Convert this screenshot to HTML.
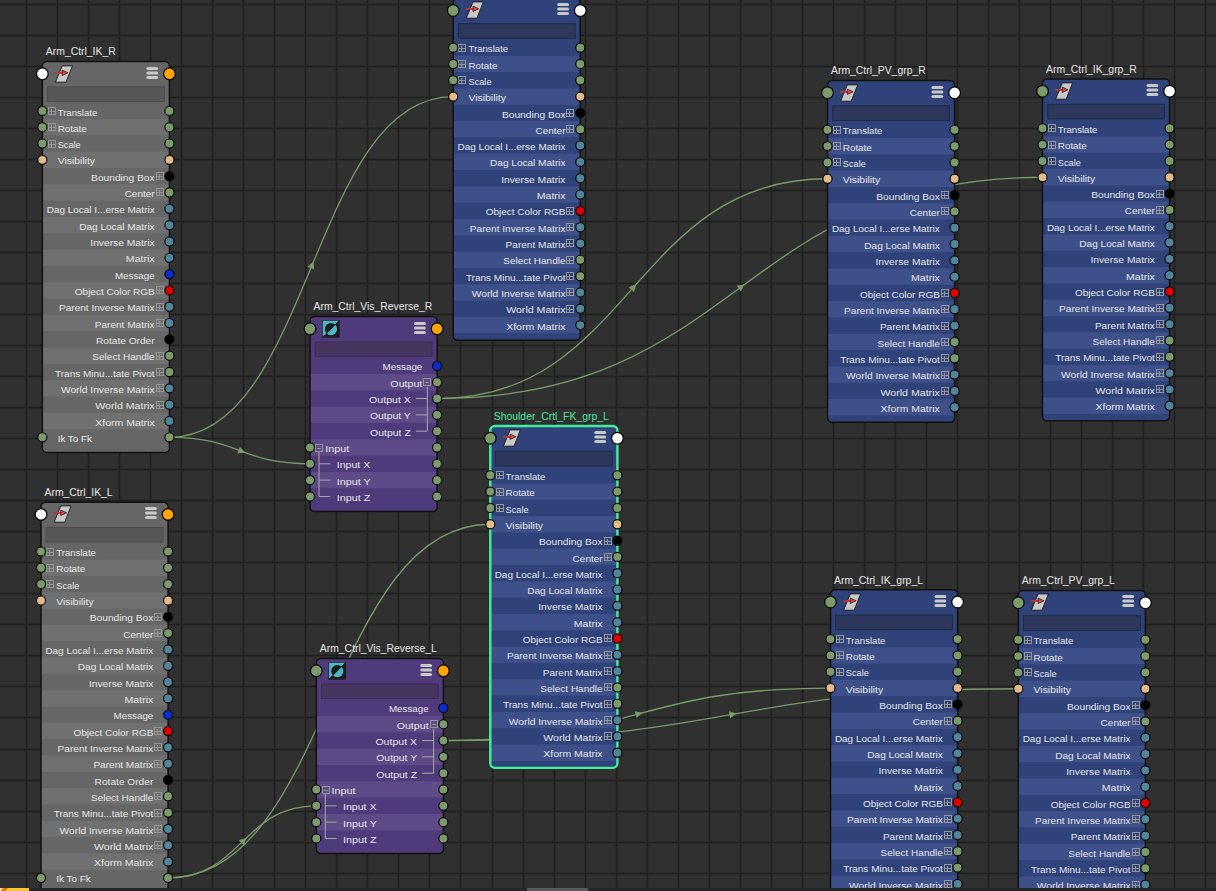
<!DOCTYPE html><html><head><meta charset="utf-8"><style>html,body{margin:0;padding:0;background:#303030;overflow:hidden}svg{display:block}text{font-family:"Liberation Sans",sans-serif}</style></head><body>
<svg width="1216" height="891" viewBox="0 0 1216 891">
<rect width="1216" height="891" fill="#303030"/>
<g><rect x="25" y="0" width="3" height="891" fill="#2a2a2a"/><rect x="56" y="0" width="3" height="891" fill="#2a2a2a"/><rect x="87" y="0" width="3" height="891" fill="#2a2a2a"/><rect x="118" y="0" width="3" height="891" fill="#2a2a2a"/><rect x="149" y="0" width="3" height="891" fill="#2a2a2a"/><rect x="180" y="0" width="3" height="891" fill="#2a2a2a"/><rect x="211" y="0" width="3" height="891" fill="#2a2a2a"/><rect x="242" y="0" width="3" height="891" fill="#2a2a2a"/><rect x="273" y="0" width="3" height="891" fill="#2a2a2a"/><rect x="304" y="0" width="3" height="891" fill="#2a2a2a"/><rect x="335" y="0" width="3" height="891" fill="#2a2a2a"/><rect x="366" y="0" width="3" height="891" fill="#2a2a2a"/><rect x="397" y="0" width="3" height="891" fill="#2a2a2a"/><rect x="428" y="0" width="3" height="891" fill="#2a2a2a"/><rect x="459" y="0" width="3" height="891" fill="#2a2a2a"/><rect x="491" y="0" width="3" height="891" fill="#2a2a2a"/><rect x="522" y="0" width="3" height="891" fill="#2a2a2a"/><rect x="553" y="0" width="3" height="891" fill="#2a2a2a"/><rect x="584" y="0" width="3" height="891" fill="#2a2a2a"/><rect x="615" y="0" width="3" height="891" fill="#2a2a2a"/><rect x="646" y="0" width="3" height="891" fill="#2a2a2a"/><rect x="677" y="0" width="3" height="891" fill="#2a2a2a"/><rect x="708" y="0" width="3" height="891" fill="#2a2a2a"/><rect x="739" y="0" width="3" height="891" fill="#2a2a2a"/><rect x="770" y="0" width="3" height="891" fill="#2a2a2a"/><rect x="801" y="0" width="3" height="891" fill="#2a2a2a"/><rect x="832" y="0" width="3" height="891" fill="#2a2a2a"/><rect x="863" y="0" width="3" height="891" fill="#2a2a2a"/><rect x="894" y="0" width="3" height="891" fill="#2a2a2a"/><rect x="925" y="0" width="3" height="891" fill="#2a2a2a"/><rect x="956" y="0" width="3" height="891" fill="#2a2a2a"/><rect x="987" y="0" width="3" height="891" fill="#2a2a2a"/><rect x="1018" y="0" width="3" height="891" fill="#2a2a2a"/><rect x="1049" y="0" width="3" height="891" fill="#2a2a2a"/><rect x="1080" y="0" width="3" height="891" fill="#2a2a2a"/><rect x="1111" y="0" width="3" height="891" fill="#2a2a2a"/><rect x="1142" y="0" width="3" height="891" fill="#2a2a2a"/><rect x="1173" y="0" width="3" height="891" fill="#2a2a2a"/><rect x="1204" y="0" width="3" height="891" fill="#2a2a2a"/><rect x="0" y="3" width="1216" height="3" fill="#2a2a2a"/><rect x="0" y="34" width="1216" height="3" fill="#2a2a2a"/><rect x="0" y="65" width="1216" height="3" fill="#2a2a2a"/><rect x="0" y="96" width="1216" height="3" fill="#2a2a2a"/><rect x="0" y="127" width="1216" height="3" fill="#2a2a2a"/><rect x="0" y="158" width="1216" height="3" fill="#2a2a2a"/><rect x="0" y="189" width="1216" height="3" fill="#2a2a2a"/><rect x="0" y="220" width="1216" height="3" fill="#2a2a2a"/><rect x="0" y="251" width="1216" height="3" fill="#2a2a2a"/><rect x="0" y="282" width="1216" height="3" fill="#2a2a2a"/><rect x="0" y="313" width="1216" height="3" fill="#2a2a2a"/><rect x="0" y="344" width="1216" height="3" fill="#2a2a2a"/><rect x="0" y="375" width="1216" height="3" fill="#2a2a2a"/><rect x="0" y="406" width="1216" height="3" fill="#2a2a2a"/><rect x="0" y="437" width="1216" height="3" fill="#2a2a2a"/><rect x="0" y="468" width="1216" height="3" fill="#2a2a2a"/><rect x="0" y="499" width="1216" height="3" fill="#2a2a2a"/><rect x="0" y="530" width="1216" height="3" fill="#2a2a2a"/><rect x="0" y="561" width="1216" height="3" fill="#2a2a2a"/><rect x="0" y="592" width="1216" height="3" fill="#2a2a2a"/><rect x="0" y="623" width="1216" height="3" fill="#2a2a2a"/><rect x="0" y="654" width="1216" height="3" fill="#2a2a2a"/><rect x="0" y="685" width="1216" height="3" fill="#2a2a2a"/><rect x="0" y="716" width="1216" height="3" fill="#2a2a2a"/><rect x="0" y="748" width="1216" height="3" fill="#2a2a2a"/><rect x="0" y="779" width="1216" height="3" fill="#2a2a2a"/><rect x="0" y="810" width="1216" height="3" fill="#2a2a2a"/><rect x="0" y="841" width="1216" height="3" fill="#2a2a2a"/><rect x="0" y="872" width="1216" height="3" fill="#2a2a2a"/><rect x="26" y="0" width="1" height="891" fill="#1f1f1f"/><rect x="57" y="0" width="1" height="891" fill="#1f1f1f"/><rect x="88" y="0" width="1" height="891" fill="#1f1f1f"/><rect x="119" y="0" width="1" height="891" fill="#1f1f1f"/><rect x="150" y="0" width="1" height="891" fill="#1f1f1f"/><rect x="181" y="0" width="1" height="891" fill="#1f1f1f"/><rect x="212" y="0" width="1" height="891" fill="#1f1f1f"/><rect x="243" y="0" width="1" height="891" fill="#1f1f1f"/><rect x="274" y="0" width="1" height="891" fill="#1f1f1f"/><rect x="305" y="0" width="1" height="891" fill="#1f1f1f"/><rect x="336" y="0" width="1" height="891" fill="#1f1f1f"/><rect x="367" y="0" width="1" height="891" fill="#1f1f1f"/><rect x="398" y="0" width="1" height="891" fill="#1f1f1f"/><rect x="429" y="0" width="1" height="891" fill="#1f1f1f"/><rect x="460" y="0" width="1" height="891" fill="#1f1f1f"/><rect x="492" y="0" width="1" height="891" fill="#1f1f1f"/><rect x="523" y="0" width="1" height="891" fill="#1f1f1f"/><rect x="554" y="0" width="1" height="891" fill="#1f1f1f"/><rect x="585" y="0" width="1" height="891" fill="#1f1f1f"/><rect x="616" y="0" width="1" height="891" fill="#1f1f1f"/><rect x="647" y="0" width="1" height="891" fill="#1f1f1f"/><rect x="678" y="0" width="1" height="891" fill="#1f1f1f"/><rect x="709" y="0" width="1" height="891" fill="#1f1f1f"/><rect x="740" y="0" width="1" height="891" fill="#1f1f1f"/><rect x="771" y="0" width="1" height="891" fill="#1f1f1f"/><rect x="802" y="0" width="1" height="891" fill="#1f1f1f"/><rect x="833" y="0" width="1" height="891" fill="#1f1f1f"/><rect x="864" y="0" width="1" height="891" fill="#1f1f1f"/><rect x="895" y="0" width="1" height="891" fill="#1f1f1f"/><rect x="926" y="0" width="1" height="891" fill="#1f1f1f"/><rect x="957" y="0" width="1" height="891" fill="#1f1f1f"/><rect x="988" y="0" width="1" height="891" fill="#1f1f1f"/><rect x="1019" y="0" width="1" height="891" fill="#1f1f1f"/><rect x="1050" y="0" width="1" height="891" fill="#1f1f1f"/><rect x="1081" y="0" width="1" height="891" fill="#1f1f1f"/><rect x="1112" y="0" width="1" height="891" fill="#1f1f1f"/><rect x="1143" y="0" width="1" height="891" fill="#1f1f1f"/><rect x="1174" y="0" width="1" height="891" fill="#1f1f1f"/><rect x="1205" y="0" width="1" height="891" fill="#1f1f1f"/><rect x="0" y="4" width="1216" height="1" fill="#1f1f1f"/><rect x="0" y="35" width="1216" height="1" fill="#1f1f1f"/><rect x="0" y="66" width="1216" height="1" fill="#1f1f1f"/><rect x="0" y="97" width="1216" height="1" fill="#1f1f1f"/><rect x="0" y="128" width="1216" height="1" fill="#1f1f1f"/><rect x="0" y="159" width="1216" height="1" fill="#1f1f1f"/><rect x="0" y="190" width="1216" height="1" fill="#1f1f1f"/><rect x="0" y="221" width="1216" height="1" fill="#1f1f1f"/><rect x="0" y="252" width="1216" height="1" fill="#1f1f1f"/><rect x="0" y="283" width="1216" height="1" fill="#1f1f1f"/><rect x="0" y="314" width="1216" height="1" fill="#1f1f1f"/><rect x="0" y="345" width="1216" height="1" fill="#1f1f1f"/><rect x="0" y="376" width="1216" height="1" fill="#1f1f1f"/><rect x="0" y="407" width="1216" height="1" fill="#1f1f1f"/><rect x="0" y="438" width="1216" height="1" fill="#1f1f1f"/><rect x="0" y="469" width="1216" height="1" fill="#1f1f1f"/><rect x="0" y="500" width="1216" height="1" fill="#1f1f1f"/><rect x="0" y="531" width="1216" height="1" fill="#1f1f1f"/><rect x="0" y="562" width="1216" height="1" fill="#1f1f1f"/><rect x="0" y="593" width="1216" height="1" fill="#1f1f1f"/><rect x="0" y="624" width="1216" height="1" fill="#1f1f1f"/><rect x="0" y="655" width="1216" height="1" fill="#1f1f1f"/><rect x="0" y="686" width="1216" height="1" fill="#1f1f1f"/><rect x="0" y="717" width="1216" height="1" fill="#1f1f1f"/><rect x="0" y="749" width="1216" height="1" fill="#1f1f1f"/><rect x="0" y="780" width="1216" height="1" fill="#1f1f1f"/><rect x="0" y="811" width="1216" height="1" fill="#1f1f1f"/><rect x="0" y="842" width="1216" height="1" fill="#1f1f1f"/><rect x="0" y="873" width="1216" height="1" fill="#1f1f1f"/></g>
<g><path d="M169.45 437.3C311.32 437.3 311.32 96.61 453.2 96.61" fill="none" stroke="#7a9a6a" stroke-width="1.3"/><path d="M5.8 0L-1.3 -3.6L-1.3 3.6Z" fill="#7a9a6a" transform="translate(311.32 266.95) rotate(-67.39)"/><path d="M169.45 437.3C239.72 437.3 239.72 463.82 310 463.82" fill="none" stroke="#7a9a6a" stroke-width="1.3"/><path d="M5.8 0L-1.3 -3.6L-1.3 3.6Z" fill="#7a9a6a" transform="translate(239.72 450.56) rotate(20.68)"/><path d="M437.1 398.54C632.3 398.54 632.3 178.76 827.5 178.76" fill="none" stroke="#7a9a6a" stroke-width="1.3"/><path d="M5.8 0L-1.3 -3.6L-1.3 3.6Z" fill="#7a9a6a" transform="translate(632.3 288.65) rotate(-48.39)"/><path d="M437.1 398.54C739.8 398.54 739.8 177.26 1042.5 177.26" fill="none" stroke="#7a9a6a" stroke-width="1.3"/><path d="M5.8 0L-1.3 -3.6L-1.3 3.6Z" fill="#7a9a6a" transform="translate(739.8 287.9) rotate(-36.17)"/><path d="M168.1 877.9C329.2 877.9 329.2 524.26 490.3 524.26" fill="none" stroke="#7a9a6a" stroke-width="1.3"/><path d="M5.8 0L-1.3 -3.6L-1.3 3.6Z" fill="#7a9a6a" transform="translate(329.2 701.08) rotate(-65.51)"/><path d="M168.1 877.9C242.2 877.9 242.2 805.82 316.3 805.82" fill="none" stroke="#7a9a6a" stroke-width="1.3"/><path d="M5.8 0L-1.3 -3.6L-1.3 3.6Z" fill="#7a9a6a" transform="translate(242.2 841.86) rotate(-44.21)"/><path d="M443.4 740.54C636.95 740.54 636.95 688.06 830.5 688.06" fill="none" stroke="#7a9a6a" stroke-width="1.3"/><path d="M5.8 0L-1.3 -3.6L-1.3 3.6Z" fill="#7a9a6a" transform="translate(636.95 714.3) rotate(-15.17)"/><path d="M443.4 740.54C730.85 740.54 730.85 688.76 1018.3 688.76" fill="none" stroke="#7a9a6a" stroke-width="1.3"/><path d="M5.8 0L-1.3 -3.6L-1.3 3.6Z" fill="#7a9a6a" transform="translate(730.85 714.65) rotate(-10.21)"/></g>
<g><text x="45.85" y="55" font-size="10.4" fill="#e6e6e6">Arm_Ctrl_IK_R</text><clipPath id="clip42_61"><rect x="42.35" y="61.6" width="127.1" height="390.8" rx="4.5"/></clipPath><rect x="42.35" y="61.6" width="127.1" height="390.8" rx="4.5" fill="#666666"/><g clip-path="url(#clip42_61)"><rect x="42.35" y="119.06" width="127.1" height="16.32" fill="#707070"/><rect x="42.35" y="151.7" width="127.1" height="16.32" fill="#707070"/><rect x="42.35" y="184.34" width="127.1" height="16.32" fill="#707070"/><rect x="42.35" y="216.98" width="127.1" height="16.32" fill="#707070"/><rect x="42.35" y="249.62" width="127.1" height="16.32" fill="#707070"/><rect x="42.35" y="282.26" width="127.1" height="16.32" fill="#707070"/><rect x="42.35" y="314.9" width="127.1" height="16.32" fill="#707070"/><rect x="42.35" y="347.54" width="127.1" height="16.32" fill="#707070"/><rect x="42.35" y="380.18" width="127.1" height="16.32" fill="#707070"/><rect x="42.35" y="412.82" width="127.1" height="16.32" fill="#707070"/></g><rect x="42.35" y="61.6" width="127.1" height="390.8" rx="4.5" fill="none" stroke="#111111" stroke-width="1.5"/><rect x="47.55" y="86.9" width="116.7" height="14.6" fill="#575757" stroke="#4c4c4c" stroke-width="1"/><path d="M62.15 65.9L72.45 65.9L66.05 82.2L55.45 82.2Z" fill="#c8c8c8" stroke="#1a1a1a" stroke-width="0.9"/><path d="M54.95 72.9L62.85 72.9" stroke="#bb3636" stroke-width="1.8"/><path d="M62.15 70.1L67.95 72.8L62.15 75.5Z" fill="#e04848" stroke="#2a0a0a" stroke-width="0.7"/><rect x="146.35" y="66.9" width="11.8" height="3" rx="1.5" fill="#c8c8c8"/><rect x="146.35" y="71.4" width="11.8" height="3" rx="1.5" fill="#c8c8c8"/><rect x="146.35" y="76" width="11.8" height="3" rx="1.5" fill="#c8c8c8"/><circle cx="42.35" cy="73.8" r="5.85" fill="#ffffff" stroke="#0a0a0a" stroke-width="1.3"/><circle cx="169.45" cy="73.8" r="5.85" fill="#ffa500" stroke="#0a0a0a" stroke-width="1.3"/><text transform="translate(57.65 116) scale(0.990 1)" x="0" y="0" font-size="9.7" fill="#e6e6e6">Translate</text><rect x="48.5" y="107.5" width="7" height="7" fill="none" stroke="#969696" stroke-width="1"/><path d="M49 111.5H55" stroke="#969696" stroke-width="1"/><path d="M51.5 109V114" stroke="#969696" stroke-width="1"/><circle cx="42.35" cy="110.9" r="4.55" fill="#7b9b6b" stroke="#0a0a0a" stroke-width="1.2"/><circle cx="169.45" cy="110.9" r="4.55" fill="#7b9b6b" stroke="#0a0a0a" stroke-width="1.2"/><text transform="translate(57.65 132) scale(1.017 1)" x="0" y="0" font-size="9.7" fill="#e6e6e6">Rotate</text><rect x="48.5" y="123.5" width="7" height="7" fill="none" stroke="#969696" stroke-width="1"/><path d="M49 127.5H55" stroke="#969696" stroke-width="1"/><path d="M51.5 125V130" stroke="#969696" stroke-width="1"/><circle cx="42.35" cy="127.22" r="4.55" fill="#7b9b6b" stroke="#0a0a0a" stroke-width="1.2"/><circle cx="169.45" cy="127.22" r="4.55" fill="#7b9b6b" stroke="#0a0a0a" stroke-width="1.2"/><text transform="translate(57.65 148) scale(0.950 1)" x="0" y="0" font-size="9.7" fill="#e6e6e6">Scale</text><rect x="48.5" y="140.5" width="7" height="7" fill="none" stroke="#969696" stroke-width="1"/><path d="M49 144.5H55" stroke="#969696" stroke-width="1"/><path d="M51.5 142V147" stroke="#969696" stroke-width="1"/><circle cx="42.35" cy="143.54" r="4.55" fill="#7b9b6b" stroke="#0a0a0a" stroke-width="1.2"/><circle cx="169.45" cy="143.54" r="4.55" fill="#7b9b6b" stroke="#0a0a0a" stroke-width="1.2"/><text transform="translate(57.65 164) scale(1.074 1)" x="0" y="0" font-size="9.7" fill="#e6e6e6">Visibility</text><circle cx="42.35" cy="159.86" r="4.55" fill="#e3bb8b" stroke="#0a0a0a" stroke-width="1.2"/><circle cx="169.45" cy="159.86" r="4.55" fill="#e3bb8b" stroke="#0a0a0a" stroke-width="1.2"/><text transform="translate(154.65 181) scale(1.053 1)" x="0" y="0" font-size="9.7" fill="#e6e6e6" text-anchor="end">Bounding Box</text><rect x="156.5" y="172.5" width="7" height="7" fill="none" stroke="#969696" stroke-width="1"/><path d="M157 176.5H163" stroke="#969696" stroke-width="1"/><path d="M159.5 174V179" stroke="#969696" stroke-width="1"/><circle cx="169.45" cy="176.18" r="4.55" fill="#000000" stroke="#0a0a0a" stroke-width="1.2"/><text transform="translate(154.65 197) scale(1.031 1)" x="0" y="0" font-size="9.7" fill="#e6e6e6" text-anchor="end">Center</text><rect x="156.5" y="188.5" width="7" height="7" fill="none" stroke="#969696" stroke-width="1"/><path d="M157 192.5H163" stroke="#969696" stroke-width="1"/><path d="M159.5 190V195" stroke="#969696" stroke-width="1"/><circle cx="169.45" cy="192.5" r="4.55" fill="#7b9b6b" stroke="#0a0a0a" stroke-width="1.2"/><text transform="translate(154.65 213) scale(1.027 1)" x="0" y="0" font-size="9.7" fill="#e6e6e6" text-anchor="end">Dag Local I...erse Matrix</text><circle cx="169.45" cy="208.82" r="4.55" fill="#52849a" stroke="#0a0a0a" stroke-width="1.2"/><text transform="translate(154.65 230) scale(1.038 1)" x="0" y="0" font-size="9.7" fill="#e6e6e6" text-anchor="end">Dag Local Matrix</text><circle cx="169.45" cy="225.14" r="4.55" fill="#52849a" stroke="#0a0a0a" stroke-width="1.2"/><text transform="translate(154.65 246) scale(1.058 1)" x="0" y="0" font-size="9.7" fill="#e6e6e6" text-anchor="end">Inverse Matrix</text><circle cx="169.45" cy="241.46" r="4.55" fill="#52849a" stroke="#0a0a0a" stroke-width="1.2"/><text transform="translate(154.65 262) scale(1.092 1)" x="0" y="0" font-size="9.7" fill="#e6e6e6" text-anchor="end">Matrix</text><circle cx="169.45" cy="257.78" r="4.55" fill="#52849a" stroke="#0a0a0a" stroke-width="1.2"/><text transform="translate(154.65 279) scale(1.010 1)" x="0" y="0" font-size="9.7" fill="#e6e6e6" text-anchor="end">Message</text><circle cx="169.45" cy="274.1" r="4.55" fill="#0b2bd0" stroke="#0a0a0a" stroke-width="1.2"/><text transform="translate(154.65 295) scale(1.030 1)" x="0" y="0" font-size="9.7" fill="#e6e6e6" text-anchor="end">Object Color RGB</text><rect x="156.5" y="286.5" width="7" height="7" fill="none" stroke="#969696" stroke-width="1"/><path d="M157 290.5H163" stroke="#969696" stroke-width="1"/><path d="M159.5 288V293" stroke="#969696" stroke-width="1"/><circle cx="169.45" cy="290.42" r="4.55" fill="#e00000" stroke="#0a0a0a" stroke-width="1.2"/><text transform="translate(154.65 311) scale(1.040 1)" x="0" y="0" font-size="9.7" fill="#e6e6e6" text-anchor="end">Parent Inverse Matrix</text><rect x="156.5" y="303.5" width="7" height="7" fill="none" stroke="#969696" stroke-width="1"/><path d="M157 307.5H163" stroke="#969696" stroke-width="1"/><path d="M159.5 305V310" stroke="#969696" stroke-width="1"/><circle cx="169.45" cy="306.74" r="4.55" fill="#52849a" stroke="#0a0a0a" stroke-width="1.2"/><text transform="translate(154.65 328) scale(1.041 1)" x="0" y="0" font-size="9.7" fill="#e6e6e6" text-anchor="end">Parent Matrix</text><rect x="156.5" y="319.5" width="7" height="7" fill="none" stroke="#969696" stroke-width="1"/><path d="M157 323.5H163" stroke="#969696" stroke-width="1"/><path d="M159.5 321V326" stroke="#969696" stroke-width="1"/><circle cx="169.45" cy="323.06" r="4.55" fill="#52849a" stroke="#0a0a0a" stroke-width="1.2"/><text transform="translate(154.65 344) scale(1.048 1)" x="0" y="0" font-size="9.7" fill="#e6e6e6" text-anchor="end">Rotate Order</text><circle cx="169.45" cy="339.38" r="4.55" fill="#000000" stroke="#0a0a0a" stroke-width="1.2"/><text transform="translate(154.65 360) scale(1.033 1)" x="0" y="0" font-size="9.7" fill="#e6e6e6" text-anchor="end">Select Handle</text><rect x="156.5" y="352.5" width="7" height="7" fill="none" stroke="#969696" stroke-width="1"/><path d="M157 356.5H163" stroke="#969696" stroke-width="1"/><path d="M159.5 354V359" stroke="#969696" stroke-width="1"/><circle cx="169.45" cy="355.7" r="4.55" fill="#7b9b6b" stroke="#0a0a0a" stroke-width="1.2"/><text transform="translate(154.65 377) scale(1.031 1)" x="0" y="0" font-size="9.7" fill="#e6e6e6" text-anchor="end">Trans Minu...tate Pivot</text><rect x="156.5" y="368.5" width="7" height="7" fill="none" stroke="#969696" stroke-width="1"/><path d="M157 372.5H163" stroke="#969696" stroke-width="1"/><path d="M159.5 370V375" stroke="#969696" stroke-width="1"/><circle cx="169.45" cy="372.02" r="4.55" fill="#7b9b6b" stroke="#0a0a0a" stroke-width="1.2"/><text transform="translate(154.65 393) scale(1.058 1)" x="0" y="0" font-size="9.7" fill="#e6e6e6" text-anchor="end">World Inverse Matrix</text><rect x="156.5" y="384.5" width="7" height="7" fill="none" stroke="#969696" stroke-width="1"/><path d="M157 388.5H163" stroke="#969696" stroke-width="1"/><path d="M159.5 386V391" stroke="#969696" stroke-width="1"/><circle cx="169.45" cy="388.34" r="4.55" fill="#52849a" stroke="#0a0a0a" stroke-width="1.2"/><text transform="translate(154.65 409) scale(1.096 1)" x="0" y="0" font-size="9.7" fill="#e6e6e6" text-anchor="end">World Matrix</text><rect x="156.5" y="401.5" width="7" height="7" fill="none" stroke="#969696" stroke-width="1"/><path d="M157 405.5H163" stroke="#969696" stroke-width="1"/><path d="M159.5 403V408" stroke="#969696" stroke-width="1"/><circle cx="169.45" cy="404.66" r="4.55" fill="#52849a" stroke="#0a0a0a" stroke-width="1.2"/><text transform="translate(154.65 426) scale(1.080 1)" x="0" y="0" font-size="9.7" fill="#e6e6e6" text-anchor="end">Xform Matrix</text><circle cx="169.45" cy="420.98" r="4.55" fill="#52849a" stroke="#0a0a0a" stroke-width="1.2"/><text transform="translate(57.65 442) scale(1.018 1)" x="0" y="0" font-size="9.7" fill="#e6e6e6">Ik To Fk</text><circle cx="42.35" cy="437.3" r="4.55" fill="#7b9b6b" stroke="#0a0a0a" stroke-width="1.2"/><circle cx="169.45" cy="437.3" r="4.55" fill="#7b9b6b" stroke="#0a0a0a" stroke-width="1.2"/></g>
<g><text x="44.5" y="496" font-size="10.4" fill="#e6e6e6">Arm_Ctrl_IK_L</text><clipPath id="clip41_502"><rect x="41" y="502.2" width="127.1" height="390.8" rx="4.5"/></clipPath><rect x="41" y="502.2" width="127.1" height="390.8" rx="4.5" fill="#666666"/><g clip-path="url(#clip41_502)"><rect x="41" y="559.66" width="127.1" height="16.32" fill="#707070"/><rect x="41" y="592.3" width="127.1" height="16.32" fill="#707070"/><rect x="41" y="624.94" width="127.1" height="16.32" fill="#707070"/><rect x="41" y="657.58" width="127.1" height="16.32" fill="#707070"/><rect x="41" y="690.22" width="127.1" height="16.32" fill="#707070"/><rect x="41" y="722.86" width="127.1" height="16.32" fill="#707070"/><rect x="41" y="755.5" width="127.1" height="16.32" fill="#707070"/><rect x="41" y="788.14" width="127.1" height="16.32" fill="#707070"/><rect x="41" y="820.78" width="127.1" height="16.32" fill="#707070"/><rect x="41" y="853.42" width="127.1" height="16.32" fill="#707070"/></g><rect x="41" y="502.2" width="127.1" height="390.8" rx="4.5" fill="none" stroke="#111111" stroke-width="1.5"/><rect x="46.2" y="527.5" width="116.7" height="14.6" fill="#575757" stroke="#4c4c4c" stroke-width="1"/><path d="M60.8 505.9L71.1 505.9L64.7 522.2L54.1 522.2Z" fill="#c8c8c8" stroke="#1a1a1a" stroke-width="0.9"/><path d="M53.6 512.9L61.5 512.9" stroke="#bb3636" stroke-width="1.8"/><path d="M60.8 510.1L66.6 512.8L60.8 515.5Z" fill="#e04848" stroke="#2a0a0a" stroke-width="0.7"/><rect x="145" y="506.9" width="11.8" height="3" rx="1.5" fill="#c8c8c8"/><rect x="145" y="511.4" width="11.8" height="3" rx="1.5" fill="#c8c8c8"/><rect x="145" y="516" width="11.8" height="3" rx="1.5" fill="#c8c8c8"/><circle cx="41" cy="514.4" r="5.85" fill="#ffffff" stroke="#0a0a0a" stroke-width="1.3"/><circle cx="168.1" cy="514.4" r="5.85" fill="#ffa500" stroke="#0a0a0a" stroke-width="1.3"/><text transform="translate(56.3 556) scale(0.990 1)" x="0" y="0" font-size="9.7" fill="#e6e6e6">Translate</text><rect x="46.5" y="548.5" width="7" height="7" fill="none" stroke="#969696" stroke-width="1"/><path d="M47 552.5H53" stroke="#969696" stroke-width="1"/><path d="M49.5 550V555" stroke="#969696" stroke-width="1"/><circle cx="41" cy="551.5" r="4.55" fill="#7b9b6b" stroke="#0a0a0a" stroke-width="1.2"/><circle cx="168.1" cy="551.5" r="4.55" fill="#7b9b6b" stroke="#0a0a0a" stroke-width="1.2"/><text transform="translate(56.3 572) scale(1.017 1)" x="0" y="0" font-size="9.7" fill="#e6e6e6">Rotate</text><rect x="46.5" y="564.5" width="7" height="7" fill="none" stroke="#969696" stroke-width="1"/><path d="M47 568.5H53" stroke="#969696" stroke-width="1"/><path d="M49.5 566V571" stroke="#969696" stroke-width="1"/><circle cx="41" cy="567.82" r="4.55" fill="#7b9b6b" stroke="#0a0a0a" stroke-width="1.2"/><circle cx="168.1" cy="567.82" r="4.55" fill="#7b9b6b" stroke="#0a0a0a" stroke-width="1.2"/><text transform="translate(56.3 589) scale(0.950 1)" x="0" y="0" font-size="9.7" fill="#e6e6e6">Scale</text><rect x="46.5" y="580.5" width="7" height="7" fill="none" stroke="#969696" stroke-width="1"/><path d="M47 584.5H53" stroke="#969696" stroke-width="1"/><path d="M49.5 582V587" stroke="#969696" stroke-width="1"/><circle cx="41" cy="584.14" r="4.55" fill="#7b9b6b" stroke="#0a0a0a" stroke-width="1.2"/><circle cx="168.1" cy="584.14" r="4.55" fill="#7b9b6b" stroke="#0a0a0a" stroke-width="1.2"/><text transform="translate(56.3 605) scale(1.074 1)" x="0" y="0" font-size="9.7" fill="#e6e6e6">Visibility</text><circle cx="41" cy="600.46" r="4.55" fill="#e3bb8b" stroke="#0a0a0a" stroke-width="1.2"/><circle cx="168.1" cy="600.46" r="4.55" fill="#e3bb8b" stroke="#0a0a0a" stroke-width="1.2"/><text transform="translate(153.3 621) scale(1.053 1)" x="0" y="0" font-size="9.7" fill="#e6e6e6" text-anchor="end">Bounding Box</text><rect x="154.5" y="613.5" width="7" height="7" fill="none" stroke="#969696" stroke-width="1"/><path d="M155 617.5H161" stroke="#969696" stroke-width="1"/><path d="M157.5 615V620" stroke="#969696" stroke-width="1"/><circle cx="168.1" cy="616.78" r="4.55" fill="#000000" stroke="#0a0a0a" stroke-width="1.2"/><text transform="translate(153.3 638) scale(1.031 1)" x="0" y="0" font-size="9.7" fill="#e6e6e6" text-anchor="end">Center</text><rect x="154.5" y="629.5" width="7" height="7" fill="none" stroke="#969696" stroke-width="1"/><path d="M155 633.5H161" stroke="#969696" stroke-width="1"/><path d="M157.5 631V636" stroke="#969696" stroke-width="1"/><circle cx="168.1" cy="633.1" r="4.55" fill="#7b9b6b" stroke="#0a0a0a" stroke-width="1.2"/><text transform="translate(153.3 654) scale(1.027 1)" x="0" y="0" font-size="9.7" fill="#e6e6e6" text-anchor="end">Dag Local I...erse Matrix</text><circle cx="168.1" cy="649.42" r="4.55" fill="#52849a" stroke="#0a0a0a" stroke-width="1.2"/><text transform="translate(153.3 670) scale(1.038 1)" x="0" y="0" font-size="9.7" fill="#e6e6e6" text-anchor="end">Dag Local Matrix</text><circle cx="168.1" cy="665.74" r="4.55" fill="#52849a" stroke="#0a0a0a" stroke-width="1.2"/><text transform="translate(153.3 687) scale(1.058 1)" x="0" y="0" font-size="9.7" fill="#e6e6e6" text-anchor="end">Inverse Matrix</text><circle cx="168.1" cy="682.06" r="4.55" fill="#52849a" stroke="#0a0a0a" stroke-width="1.2"/><text transform="translate(153.3 703) scale(1.092 1)" x="0" y="0" font-size="9.7" fill="#e6e6e6" text-anchor="end">Matrix</text><circle cx="168.1" cy="698.38" r="4.55" fill="#52849a" stroke="#0a0a0a" stroke-width="1.2"/><text transform="translate(153.3 719) scale(1.010 1)" x="0" y="0" font-size="9.7" fill="#e6e6e6" text-anchor="end">Message</text><circle cx="168.1" cy="714.7" r="4.55" fill="#0b2bd0" stroke="#0a0a0a" stroke-width="1.2"/><text transform="translate(153.3 736) scale(1.030 1)" x="0" y="0" font-size="9.7" fill="#e6e6e6" text-anchor="end">Object Color RGB</text><rect x="154.5" y="727.5" width="7" height="7" fill="none" stroke="#969696" stroke-width="1"/><path d="M155 731.5H161" stroke="#969696" stroke-width="1"/><path d="M157.5 729V734" stroke="#969696" stroke-width="1"/><circle cx="168.1" cy="731.02" r="4.55" fill="#e00000" stroke="#0a0a0a" stroke-width="1.2"/><text transform="translate(153.3 752) scale(1.040 1)" x="0" y="0" font-size="9.7" fill="#e6e6e6" text-anchor="end">Parent Inverse Matrix</text><rect x="154.5" y="743.5" width="7" height="7" fill="none" stroke="#969696" stroke-width="1"/><path d="M155 747.5H161" stroke="#969696" stroke-width="1"/><path d="M157.5 745V750" stroke="#969696" stroke-width="1"/><circle cx="168.1" cy="747.34" r="4.55" fill="#52849a" stroke="#0a0a0a" stroke-width="1.2"/><text transform="translate(153.3 768) scale(1.041 1)" x="0" y="0" font-size="9.7" fill="#e6e6e6" text-anchor="end">Parent Matrix</text><rect x="154.5" y="760.5" width="7" height="7" fill="none" stroke="#969696" stroke-width="1"/><path d="M155 764.5H161" stroke="#969696" stroke-width="1"/><path d="M157.5 762V767" stroke="#969696" stroke-width="1"/><circle cx="168.1" cy="763.66" r="4.55" fill="#52849a" stroke="#0a0a0a" stroke-width="1.2"/><text transform="translate(153.3 785) scale(1.048 1)" x="0" y="0" font-size="9.7" fill="#e6e6e6" text-anchor="end">Rotate Order</text><circle cx="168.1" cy="779.98" r="4.55" fill="#000000" stroke="#0a0a0a" stroke-width="1.2"/><text transform="translate(153.3 801) scale(1.033 1)" x="0" y="0" font-size="9.7" fill="#e6e6e6" text-anchor="end">Select Handle</text><rect x="154.5" y="792.5" width="7" height="7" fill="none" stroke="#969696" stroke-width="1"/><path d="M155 796.5H161" stroke="#969696" stroke-width="1"/><path d="M157.5 794V799" stroke="#969696" stroke-width="1"/><circle cx="168.1" cy="796.3" r="4.55" fill="#7b9b6b" stroke="#0a0a0a" stroke-width="1.2"/><text transform="translate(153.3 817) scale(1.031 1)" x="0" y="0" font-size="9.7" fill="#e6e6e6" text-anchor="end">Trans Minu...tate Pivot</text><rect x="154.5" y="809.5" width="7" height="7" fill="none" stroke="#969696" stroke-width="1"/><path d="M155 813.5H161" stroke="#969696" stroke-width="1"/><path d="M157.5 811V816" stroke="#969696" stroke-width="1"/><circle cx="168.1" cy="812.62" r="4.55" fill="#7b9b6b" stroke="#0a0a0a" stroke-width="1.2"/><text transform="translate(153.3 834) scale(1.058 1)" x="0" y="0" font-size="9.7" fill="#e6e6e6" text-anchor="end">World Inverse Matrix</text><rect x="154.5" y="825.5" width="7" height="7" fill="none" stroke="#969696" stroke-width="1"/><path d="M155 829.5H161" stroke="#969696" stroke-width="1"/><path d="M157.5 827V832" stroke="#969696" stroke-width="1"/><circle cx="168.1" cy="828.94" r="4.55" fill="#52849a" stroke="#0a0a0a" stroke-width="1.2"/><text transform="translate(153.3 850) scale(1.096 1)" x="0" y="0" font-size="9.7" fill="#e6e6e6" text-anchor="end">World Matrix</text><rect x="154.5" y="841.5" width="7" height="7" fill="none" stroke="#969696" stroke-width="1"/><path d="M155 845.5H161" stroke="#969696" stroke-width="1"/><path d="M157.5 843V848" stroke="#969696" stroke-width="1"/><circle cx="168.1" cy="845.26" r="4.55" fill="#52849a" stroke="#0a0a0a" stroke-width="1.2"/><text transform="translate(153.3 866) scale(1.080 1)" x="0" y="0" font-size="9.7" fill="#e6e6e6" text-anchor="end">Xform Matrix</text><circle cx="168.1" cy="861.58" r="4.55" fill="#52849a" stroke="#0a0a0a" stroke-width="1.2"/><text transform="translate(56.3 882) scale(1.018 1)" x="0" y="0" font-size="9.7" fill="#e6e6e6">Ik To Fk</text><circle cx="41" cy="877.9" r="4.55" fill="#7b9b6b" stroke="#0a0a0a" stroke-width="1.2"/><circle cx="168.1" cy="877.9" r="4.55" fill="#7b9b6b" stroke="#0a0a0a" stroke-width="1.2"/></g>
<g><clipPath id="clip453_-1"><rect x="453.2" y="-1.65" width="127.1" height="341.84" rx="4.5"/></clipPath><rect x="453.2" y="-1.65" width="127.1" height="341.84" rx="4.5" fill="#2f4279"/><g clip-path="url(#clip453_-1)"><rect x="453.2" y="55.81" width="127.1" height="16.32" fill="#3e5089"/><rect x="453.2" y="88.45" width="127.1" height="16.32" fill="#3e5089"/><rect x="453.2" y="121.09" width="127.1" height="16.32" fill="#3e5089"/><rect x="453.2" y="153.73" width="127.1" height="16.32" fill="#3e5089"/><rect x="453.2" y="186.37" width="127.1" height="16.32" fill="#3e5089"/><rect x="453.2" y="219.01" width="127.1" height="16.32" fill="#3e5089"/><rect x="453.2" y="251.65" width="127.1" height="16.32" fill="#3e5089"/><rect x="453.2" y="284.29" width="127.1" height="16.32" fill="#3e5089"/><rect x="453.2" y="316.93" width="127.1" height="16.32" fill="#3e5089"/></g><rect x="453.2" y="-1.65" width="127.1" height="341.84" rx="4.5" fill="none" stroke="#111111" stroke-width="1.5"/><rect x="458.4" y="23.65" width="116.7" height="14.6" fill="#2e385d" stroke="#1f2946" stroke-width="1"/><path d="M473 1.9L483.3 1.9L476.9 18.2L466.3 18.2Z" fill="#c8c8c8" stroke="#1a1a1a" stroke-width="0.9"/><path d="M465.8 8.9L473.7 8.9" stroke="#bb3636" stroke-width="1.8"/><path d="M473 6.1L478.8 8.8L473 11.5Z" fill="#e04848" stroke="#2a0a0a" stroke-width="0.7"/><rect x="557.2" y="2.9" width="11.8" height="3" rx="1.5" fill="#c8c8c8"/><rect x="557.2" y="7.4" width="11.8" height="3" rx="1.5" fill="#c8c8c8"/><rect x="557.2" y="12" width="11.8" height="3" rx="1.5" fill="#c8c8c8"/><circle cx="453.2" cy="10.55" r="5.85" fill="#7b9b6b" stroke="#0a0a0a" stroke-width="1.3"/><circle cx="580.3" cy="10.55" r="5.85" fill="#ffffff" stroke="#0a0a0a" stroke-width="1.3"/><text transform="translate(468.5 52) scale(0.990 1)" x="0" y="0" font-size="9.7" fill="#e6e6e6">Translate</text><rect x="458.5" y="44.5" width="7" height="7" fill="none" stroke="#969696" stroke-width="1"/><path d="M459 48.5H465" stroke="#969696" stroke-width="1"/><path d="M461.5 46V51" stroke="#969696" stroke-width="1"/><circle cx="453.2" cy="47.65" r="4.55" fill="#7b9b6b" stroke="#0a0a0a" stroke-width="1.2"/><circle cx="580.3" cy="47.65" r="4.55" fill="#7b9b6b" stroke="#0a0a0a" stroke-width="1.2"/><text transform="translate(468.5 69) scale(1.017 1)" x="0" y="0" font-size="9.7" fill="#e6e6e6">Rotate</text><rect x="458.5" y="60.5" width="7" height="7" fill="none" stroke="#969696" stroke-width="1"/><path d="M459 64.5H465" stroke="#969696" stroke-width="1"/><path d="M461.5 62V67" stroke="#969696" stroke-width="1"/><circle cx="453.2" cy="63.97" r="4.55" fill="#7b9b6b" stroke="#0a0a0a" stroke-width="1.2"/><circle cx="580.3" cy="63.97" r="4.55" fill="#7b9b6b" stroke="#0a0a0a" stroke-width="1.2"/><text transform="translate(468.5 85) scale(0.950 1)" x="0" y="0" font-size="9.7" fill="#e6e6e6">Scale</text><rect x="458.5" y="76.5" width="7" height="7" fill="none" stroke="#969696" stroke-width="1"/><path d="M459 80.5H465" stroke="#969696" stroke-width="1"/><path d="M461.5 78V83" stroke="#969696" stroke-width="1"/><circle cx="453.2" cy="80.29" r="4.55" fill="#7b9b6b" stroke="#0a0a0a" stroke-width="1.2"/><circle cx="580.3" cy="80.29" r="4.55" fill="#7b9b6b" stroke="#0a0a0a" stroke-width="1.2"/><text transform="translate(468.5 101) scale(1.074 1)" x="0" y="0" font-size="9.7" fill="#e6e6e6">Visibility</text><circle cx="453.2" cy="96.61" r="4.55" fill="#e3bb8b" stroke="#0a0a0a" stroke-width="1.2"/><circle cx="580.3" cy="96.61" r="4.55" fill="#e3bb8b" stroke="#0a0a0a" stroke-width="1.2"/><text transform="translate(565.5 118) scale(1.053 1)" x="0" y="0" font-size="9.7" fill="#e6e6e6" text-anchor="end">Bounding Box</text><rect x="566.5" y="109.5" width="7" height="7" fill="none" stroke="#969696" stroke-width="1"/><path d="M567 113.5H573" stroke="#969696" stroke-width="1"/><path d="M569.5 111V116" stroke="#969696" stroke-width="1"/><circle cx="580.3" cy="112.93" r="4.55" fill="#000000" stroke="#0a0a0a" stroke-width="1.2"/><text transform="translate(565.5 134) scale(1.031 1)" x="0" y="0" font-size="9.7" fill="#e6e6e6" text-anchor="end">Center</text><rect x="566.5" y="125.5" width="7" height="7" fill="none" stroke="#969696" stroke-width="1"/><path d="M567 129.5H573" stroke="#969696" stroke-width="1"/><path d="M569.5 127V132" stroke="#969696" stroke-width="1"/><circle cx="580.3" cy="129.25" r="4.55" fill="#7b9b6b" stroke="#0a0a0a" stroke-width="1.2"/><text transform="translate(565.5 150) scale(1.027 1)" x="0" y="0" font-size="9.7" fill="#e6e6e6" text-anchor="end">Dag Local I...erse Matrix</text><circle cx="580.3" cy="145.57" r="4.55" fill="#52849a" stroke="#0a0a0a" stroke-width="1.2"/><text transform="translate(565.5 166) scale(1.038 1)" x="0" y="0" font-size="9.7" fill="#e6e6e6" text-anchor="end">Dag Local Matrix</text><circle cx="580.3" cy="161.89" r="4.55" fill="#52849a" stroke="#0a0a0a" stroke-width="1.2"/><text transform="translate(565.5 183) scale(1.058 1)" x="0" y="0" font-size="9.7" fill="#e6e6e6" text-anchor="end">Inverse Matrix</text><circle cx="580.3" cy="178.21" r="4.55" fill="#52849a" stroke="#0a0a0a" stroke-width="1.2"/><text transform="translate(565.5 199) scale(1.092 1)" x="0" y="0" font-size="9.7" fill="#e6e6e6" text-anchor="end">Matrix</text><circle cx="580.3" cy="194.53" r="4.55" fill="#52849a" stroke="#0a0a0a" stroke-width="1.2"/><text transform="translate(565.5 215) scale(1.030 1)" x="0" y="0" font-size="9.7" fill="#e6e6e6" text-anchor="end">Object Color RGB</text><rect x="566.5" y="207.5" width="7" height="7" fill="none" stroke="#969696" stroke-width="1"/><path d="M567 211.5H573" stroke="#969696" stroke-width="1"/><path d="M569.5 209V214" stroke="#969696" stroke-width="1"/><circle cx="580.3" cy="210.85" r="4.55" fill="#e00000" stroke="#0a0a0a" stroke-width="1.2"/><text transform="translate(565.5 232) scale(1.040 1)" x="0" y="0" font-size="9.7" fill="#e6e6e6" text-anchor="end">Parent Inverse Matrix</text><rect x="566.5" y="223.5" width="7" height="7" fill="none" stroke="#969696" stroke-width="1"/><path d="M567 227.5H573" stroke="#969696" stroke-width="1"/><path d="M569.5 225V230" stroke="#969696" stroke-width="1"/><circle cx="580.3" cy="227.17" r="4.55" fill="#52849a" stroke="#0a0a0a" stroke-width="1.2"/><text transform="translate(565.5 248) scale(1.041 1)" x="0" y="0" font-size="9.7" fill="#e6e6e6" text-anchor="end">Parent Matrix</text><rect x="566.5" y="239.5" width="7" height="7" fill="none" stroke="#969696" stroke-width="1"/><path d="M567 243.5H573" stroke="#969696" stroke-width="1"/><path d="M569.5 241V246" stroke="#969696" stroke-width="1"/><circle cx="580.3" cy="243.49" r="4.55" fill="#52849a" stroke="#0a0a0a" stroke-width="1.2"/><text transform="translate(565.5 264) scale(1.033 1)" x="0" y="0" font-size="9.7" fill="#e6e6e6" text-anchor="end">Select Handle</text><rect x="566.5" y="256.5" width="7" height="7" fill="none" stroke="#969696" stroke-width="1"/><path d="M567 260.5H573" stroke="#969696" stroke-width="1"/><path d="M569.5 258V263" stroke="#969696" stroke-width="1"/><circle cx="580.3" cy="259.81" r="4.55" fill="#7b9b6b" stroke="#0a0a0a" stroke-width="1.2"/><text transform="translate(565.5 281) scale(1.031 1)" x="0" y="0" font-size="9.7" fill="#e6e6e6" text-anchor="end">Trans Minu...tate Pivot</text><rect x="566.5" y="272.5" width="7" height="7" fill="none" stroke="#969696" stroke-width="1"/><path d="M567 276.5H573" stroke="#969696" stroke-width="1"/><path d="M569.5 274V279" stroke="#969696" stroke-width="1"/><circle cx="580.3" cy="276.13" r="4.55" fill="#7b9b6b" stroke="#0a0a0a" stroke-width="1.2"/><text transform="translate(565.5 297) scale(1.058 1)" x="0" y="0" font-size="9.7" fill="#e6e6e6" text-anchor="end">World Inverse Matrix</text><rect x="566.5" y="288.5" width="7" height="7" fill="none" stroke="#969696" stroke-width="1"/><path d="M567 292.5H573" stroke="#969696" stroke-width="1"/><path d="M569.5 290V295" stroke="#969696" stroke-width="1"/><circle cx="580.3" cy="292.45" r="4.55" fill="#52849a" stroke="#0a0a0a" stroke-width="1.2"/><text transform="translate(565.5 313) scale(1.096 1)" x="0" y="0" font-size="9.7" fill="#e6e6e6" text-anchor="end">World Matrix</text><rect x="566.5" y="305.5" width="7" height="7" fill="none" stroke="#969696" stroke-width="1"/><path d="M567 309.5H573" stroke="#969696" stroke-width="1"/><path d="M569.5 307V312" stroke="#969696" stroke-width="1"/><circle cx="580.3" cy="308.77" r="4.55" fill="#52849a" stroke="#0a0a0a" stroke-width="1.2"/><text transform="translate(565.5 330) scale(1.080 1)" x="0" y="0" font-size="9.7" fill="#e6e6e6" text-anchor="end">Xform Matrix</text><circle cx="580.3" cy="325.09" r="4.55" fill="#52849a" stroke="#0a0a0a" stroke-width="1.2"/></g>
<g><text x="313.5" y="310" font-size="10.4" fill="#e6e6e6">Arm_Ctrl_Vis_Reverse_R</text><clipPath id="clip310_316"><rect x="310" y="316.6" width="127.1" height="194.96" rx="4.5"/></clipPath><rect x="310" y="316.6" width="127.1" height="194.96" rx="4.5" fill="#4f3a7b"/><g clip-path="url(#clip310_316)"><rect x="310" y="374.06" width="127.1" height="16.32" fill="#5e4a87"/><rect x="310" y="406.7" width="127.1" height="16.32" fill="#5e4a87"/><rect x="310" y="439.34" width="127.1" height="16.32" fill="#5e4a87"/><rect x="310" y="471.98" width="127.1" height="16.32" fill="#5e4a87"/></g><rect x="310" y="316.6" width="127.1" height="194.96" rx="4.5" fill="none" stroke="#111111" stroke-width="1.5"/><rect x="315.2" y="341.9" width="116.7" height="14.6" fill="#46355f" stroke="#3d2d55" stroke-width="1"/><rect x="322.2" y="320.2" width="17.5" height="17.5" fill="#1d1d1d"/><path d="M322.8 320.8L339.1 320.8L322.8 337.1Z" fill="#4db6c3"/><clipPath id="ic310"><path d="M339.7 320.2L339.7 337.7L322.2 337.7Z"/></clipPath><clipPath id="id310"><path d="M322.2 320.2L339.7 320.2L322.2 337.7Z"/></clipPath><circle cx="331" cy="329.1" r="6.1" fill="#4db6c3" clip-path="url(#ic310)"/><circle cx="331" cy="329.1" r="6.1" fill="#1d1d1d" clip-path="url(#id310)"/><path d="M339.7 320.2L322.2 337.7" stroke="#1d1d1d" stroke-width="1"/><rect x="414" y="321.9" width="11.8" height="3" rx="1.5" fill="#c8c8c8"/><rect x="414" y="326.4" width="11.8" height="3" rx="1.5" fill="#c8c8c8"/><rect x="414" y="331" width="11.8" height="3" rx="1.5" fill="#c8c8c8"/><circle cx="310" cy="328.8" r="5.85" fill="#7b9b6b" stroke="#0a0a0a" stroke-width="1.3"/><circle cx="437.1" cy="328.8" r="5.85" fill="#ffa500" stroke="#0a0a0a" stroke-width="1.3"/><text transform="translate(422.3 370) scale(1.010 1)" x="0" y="0" font-size="9.7" fill="#e6e6e6" text-anchor="end">Message</text><circle cx="437.1" cy="365.9" r="4.55" fill="#0b2bd0" stroke="#0a0a0a" stroke-width="1.2"/><text transform="translate(422.3 387) scale(1.097 1)" x="0" y="0" font-size="9.7" fill="#e6e6e6" text-anchor="end">Output</text><rect x="423.5" y="378.5" width="7" height="7" fill="none" stroke="#969696" stroke-width="1"/><path d="M425 382.5H429" stroke="#969696" stroke-width="1"/><circle cx="437.1" cy="382.22" r="4.55" fill="#7b9b6b" stroke="#0a0a0a" stroke-width="1.2"/><text transform="translate(410.8 403) scale(1.089 1)" x="0" y="0" font-size="9.7" fill="#e6e6e6" text-anchor="end">Output X</text><path d="M415.9 398.54H427.3" stroke="#a9a9a1" stroke-width="1"/><circle cx="437.1" cy="398.54" r="4.55" fill="#7b9b6b" stroke="#0a0a0a" stroke-width="1.2"/><text transform="translate(410.8 419) scale(1.071 1)" x="0" y="0" font-size="9.7" fill="#e6e6e6" text-anchor="end">Output Y</text><path d="M415.9 414.86H427.3" stroke="#a9a9a1" stroke-width="1"/><circle cx="437.1" cy="414.86" r="4.55" fill="#7b9b6b" stroke="#0a0a0a" stroke-width="1.2"/><text transform="translate(410.8 436) scale(1.082 1)" x="0" y="0" font-size="9.7" fill="#e6e6e6" text-anchor="end">Output Z</text><path d="M415.9 431.18H427.3" stroke="#a9a9a1" stroke-width="1"/><circle cx="437.1" cy="431.18" r="4.55" fill="#7b9b6b" stroke="#0a0a0a" stroke-width="1.2"/><text transform="translate(325.3 452) scale(1.114 1)" x="0" y="0" font-size="9.7" fill="#e6e6e6">Input</text><rect x="315.5" y="444.5" width="7" height="7" fill="none" stroke="#969696" stroke-width="1"/><path d="M317 448.5H321" stroke="#969696" stroke-width="1"/><circle cx="310" cy="447.5" r="4.55" fill="#7b9b6b" stroke="#0a0a0a" stroke-width="1.2"/><circle cx="437.1" cy="447.5" r="4.55" fill="#7b9b6b" stroke="#0a0a0a" stroke-width="1.2"/><text transform="translate(336.7 468) scale(1.090 1)" x="0" y="0" font-size="9.7" fill="#e6e6e6">Input X</text><path d="M319 463.82H330.4" stroke="#a9a9a1" stroke-width="1"/><circle cx="310" cy="463.82" r="4.55" fill="#7b9b6b" stroke="#0a0a0a" stroke-width="1.2"/><circle cx="437.1" cy="463.82" r="4.55" fill="#7b9b6b" stroke="#0a0a0a" stroke-width="1.2"/><text transform="translate(336.7 485) scale(1.114 1)" x="0" y="0" font-size="9.7" fill="#e6e6e6">Input Y</text><path d="M319 480.14H330.4" stroke="#a9a9a1" stroke-width="1"/><circle cx="310" cy="480.14" r="4.55" fill="#7b9b6b" stroke="#0a0a0a" stroke-width="1.2"/><circle cx="437.1" cy="480.14" r="4.55" fill="#7b9b6b" stroke="#0a0a0a" stroke-width="1.2"/><text transform="translate(336.7 501) scale(1.114 1)" x="0" y="0" font-size="9.7" fill="#e6e6e6">Input Z</text><path d="M319 496.46H330.4" stroke="#a9a9a1" stroke-width="1"/><circle cx="310" cy="496.46" r="4.55" fill="#7b9b6b" stroke="#0a0a0a" stroke-width="1.2"/><circle cx="437.1" cy="496.46" r="4.55" fill="#7b9b6b" stroke="#0a0a0a" stroke-width="1.2"/><path d="M427.3 386.72V431.18" stroke="#a9a9a1" stroke-width="1"/><path d="M319 452V496.46" stroke="#a9a9a1" stroke-width="1"/></g>
<g><text x="319.8" y="652" font-size="10.4" fill="#e6e6e6">Arm_Ctrl_Vis_Reverse_L</text><clipPath id="clip316_658"><rect x="316.3" y="658.6" width="127.1" height="194.96" rx="4.5"/></clipPath><rect x="316.3" y="658.6" width="127.1" height="194.96" rx="4.5" fill="#4f3a7b"/><g clip-path="url(#clip316_658)"><rect x="316.3" y="716.06" width="127.1" height="16.32" fill="#5e4a87"/><rect x="316.3" y="748.7" width="127.1" height="16.32" fill="#5e4a87"/><rect x="316.3" y="781.34" width="127.1" height="16.32" fill="#5e4a87"/><rect x="316.3" y="813.98" width="127.1" height="16.32" fill="#5e4a87"/></g><rect x="316.3" y="658.6" width="127.1" height="194.96" rx="4.5" fill="none" stroke="#111111" stroke-width="1.5"/><rect x="321.5" y="683.9" width="116.7" height="14.6" fill="#46355f" stroke="#3d2d55" stroke-width="1"/><rect x="328.5" y="662.2" width="17.5" height="17.5" fill="#1d1d1d"/><path d="M329.1 662.8L345.4 662.8L329.1 679.1Z" fill="#4db6c3"/><clipPath id="ic316"><path d="M346 662.2L346 679.7L328.5 679.7Z"/></clipPath><clipPath id="id316"><path d="M328.5 662.2L346 662.2L328.5 679.7Z"/></clipPath><circle cx="337.3" cy="671.1" r="6.1" fill="#4db6c3" clip-path="url(#ic316)"/><circle cx="337.3" cy="671.1" r="6.1" fill="#1d1d1d" clip-path="url(#id316)"/><path d="M346 662.2L328.5 679.7" stroke="#1d1d1d" stroke-width="1"/><rect x="420.3" y="663.9" width="11.8" height="3" rx="1.5" fill="#c8c8c8"/><rect x="420.3" y="668.4" width="11.8" height="3" rx="1.5" fill="#c8c8c8"/><rect x="420.3" y="673" width="11.8" height="3" rx="1.5" fill="#c8c8c8"/><circle cx="316.3" cy="670.8" r="5.85" fill="#7b9b6b" stroke="#0a0a0a" stroke-width="1.3"/><circle cx="443.4" cy="670.8" r="5.85" fill="#ffa500" stroke="#0a0a0a" stroke-width="1.3"/><text transform="translate(428.6 712) scale(1.010 1)" x="0" y="0" font-size="9.7" fill="#e6e6e6" text-anchor="end">Message</text><circle cx="443.4" cy="707.9" r="4.55" fill="#0b2bd0" stroke="#0a0a0a" stroke-width="1.2"/><text transform="translate(428.6 729) scale(1.097 1)" x="0" y="0" font-size="9.7" fill="#e6e6e6" text-anchor="end">Output</text><rect x="430.5" y="720.5" width="7" height="7" fill="none" stroke="#969696" stroke-width="1"/><path d="M432 724.5H436" stroke="#969696" stroke-width="1"/><circle cx="443.4" cy="724.22" r="4.55" fill="#7b9b6b" stroke="#0a0a0a" stroke-width="1.2"/><text transform="translate(417.1 745) scale(1.089 1)" x="0" y="0" font-size="9.7" fill="#e6e6e6" text-anchor="end">Output X</text><path d="M422.2 740.54H433.6" stroke="#a9a9a1" stroke-width="1"/><circle cx="443.4" cy="740.54" r="4.55" fill="#7b9b6b" stroke="#0a0a0a" stroke-width="1.2"/><text transform="translate(417.1 761) scale(1.071 1)" x="0" y="0" font-size="9.7" fill="#e6e6e6" text-anchor="end">Output Y</text><path d="M422.2 756.86H433.6" stroke="#a9a9a1" stroke-width="1"/><circle cx="443.4" cy="756.86" r="4.55" fill="#7b9b6b" stroke="#0a0a0a" stroke-width="1.2"/><text transform="translate(417.1 778) scale(1.082 1)" x="0" y="0" font-size="9.7" fill="#e6e6e6" text-anchor="end">Output Z</text><path d="M422.2 773.18H433.6" stroke="#a9a9a1" stroke-width="1"/><circle cx="443.4" cy="773.18" r="4.55" fill="#7b9b6b" stroke="#0a0a0a" stroke-width="1.2"/><text transform="translate(331.6 794) scale(1.114 1)" x="0" y="0" font-size="9.7" fill="#e6e6e6">Input</text><rect x="322.5" y="786.5" width="7" height="7" fill="none" stroke="#969696" stroke-width="1"/><path d="M324 790.5H328" stroke="#969696" stroke-width="1"/><circle cx="316.3" cy="789.5" r="4.55" fill="#7b9b6b" stroke="#0a0a0a" stroke-width="1.2"/><circle cx="443.4" cy="789.5" r="4.55" fill="#7b9b6b" stroke="#0a0a0a" stroke-width="1.2"/><text transform="translate(343 810) scale(1.090 1)" x="0" y="0" font-size="9.7" fill="#e6e6e6">Input X</text><path d="M325.3 805.82H336.7" stroke="#a9a9a1" stroke-width="1"/><circle cx="316.3" cy="805.82" r="4.55" fill="#7b9b6b" stroke="#0a0a0a" stroke-width="1.2"/><circle cx="443.4" cy="805.82" r="4.55" fill="#7b9b6b" stroke="#0a0a0a" stroke-width="1.2"/><text transform="translate(343 827) scale(1.114 1)" x="0" y="0" font-size="9.7" fill="#e6e6e6">Input Y</text><path d="M325.3 822.14H336.7" stroke="#a9a9a1" stroke-width="1"/><circle cx="316.3" cy="822.14" r="4.55" fill="#7b9b6b" stroke="#0a0a0a" stroke-width="1.2"/><circle cx="443.4" cy="822.14" r="4.55" fill="#7b9b6b" stroke="#0a0a0a" stroke-width="1.2"/><text transform="translate(343 843) scale(1.114 1)" x="0" y="0" font-size="9.7" fill="#e6e6e6">Input Z</text><path d="M325.3 838.46H336.7" stroke="#a9a9a1" stroke-width="1"/><circle cx="316.3" cy="838.46" r="4.55" fill="#7b9b6b" stroke="#0a0a0a" stroke-width="1.2"/><circle cx="443.4" cy="838.46" r="4.55" fill="#7b9b6b" stroke="#0a0a0a" stroke-width="1.2"/><path d="M433.6 728.72V773.18" stroke="#a9a9a1" stroke-width="1"/><path d="M325.3 794V838.46" stroke="#a9a9a1" stroke-width="1"/></g>
<g><text x="493.8" y="420" font-size="10.4" fill="#4ee6a0">Shoulder_Crtl_FK_grp_L</text><clipPath id="clip490_426"><rect x="490.3" y="426" width="127.1" height="341.84" rx="4.5"/></clipPath><rect x="490.3" y="426" width="127.1" height="341.84" rx="4.5" fill="#2f4279"/><g clip-path="url(#clip490_426)"><rect x="490.3" y="483.46" width="127.1" height="16.32" fill="#3e5089"/><rect x="490.3" y="516.1" width="127.1" height="16.32" fill="#3e5089"/><rect x="490.3" y="548.74" width="127.1" height="16.32" fill="#3e5089"/><rect x="490.3" y="581.38" width="127.1" height="16.32" fill="#3e5089"/><rect x="490.3" y="614.02" width="127.1" height="16.32" fill="#3e5089"/><rect x="490.3" y="646.66" width="127.1" height="16.32" fill="#3e5089"/><rect x="490.3" y="679.3" width="127.1" height="16.32" fill="#3e5089"/><rect x="490.3" y="711.94" width="127.1" height="16.32" fill="#3e5089"/><rect x="490.3" y="744.58" width="127.1" height="16.32" fill="#3e5089"/></g><rect x="490.3" y="426" width="127.1" height="341.84" rx="4.5" fill="none" stroke="#40ee9c" stroke-width="2.4"/><rect x="495.5" y="451.3" width="116.7" height="14.6" fill="#2e385d" stroke="#1f2946" stroke-width="1"/><path d="M510.1 429.9L520.4 429.9L514 446.2L503.4 446.2Z" fill="#c8c8c8" stroke="#1a1a1a" stroke-width="0.9"/><path d="M502.9 436.9L510.8 436.9" stroke="#bb3636" stroke-width="1.8"/><path d="M510.1 434.1L515.9 436.8L510.1 439.5Z" fill="#e04848" stroke="#2a0a0a" stroke-width="0.7"/><rect x="594.3" y="430.9" width="11.8" height="3" rx="1.5" fill="#c8c8c8"/><rect x="594.3" y="435.4" width="11.8" height="3" rx="1.5" fill="#c8c8c8"/><rect x="594.3" y="440" width="11.8" height="3" rx="1.5" fill="#c8c8c8"/><circle cx="490.3" cy="438.2" r="5.85" fill="#7b9b6b" stroke="#0a0a0a" stroke-width="1.3"/><circle cx="617.4" cy="438.2" r="5.85" fill="#ffffff" stroke="#0a0a0a" stroke-width="1.3"/><text transform="translate(505.6 480) scale(0.990 1)" x="0" y="0" font-size="9.7" fill="#e6e6e6">Translate</text><rect x="496.5" y="471.5" width="7" height="7" fill="none" stroke="#969696" stroke-width="1"/><path d="M497 475.5H503" stroke="#969696" stroke-width="1"/><path d="M499.5 473V478" stroke="#969696" stroke-width="1"/><circle cx="490.3" cy="475.3" r="4.55" fill="#7b9b6b" stroke="#0a0a0a" stroke-width="1.2"/><circle cx="617.4" cy="475.3" r="4.55" fill="#7b9b6b" stroke="#0a0a0a" stroke-width="1.2"/><text transform="translate(505.6 496) scale(1.017 1)" x="0" y="0" font-size="9.7" fill="#e6e6e6">Rotate</text><rect x="496.5" y="488.5" width="7" height="7" fill="none" stroke="#969696" stroke-width="1"/><path d="M497 492.5H503" stroke="#969696" stroke-width="1"/><path d="M499.5 490V495" stroke="#969696" stroke-width="1"/><circle cx="490.3" cy="491.62" r="4.55" fill="#7b9b6b" stroke="#0a0a0a" stroke-width="1.2"/><circle cx="617.4" cy="491.62" r="4.55" fill="#7b9b6b" stroke="#0a0a0a" stroke-width="1.2"/><text transform="translate(505.6 513) scale(0.950 1)" x="0" y="0" font-size="9.7" fill="#e6e6e6">Scale</text><rect x="496.5" y="504.5" width="7" height="7" fill="none" stroke="#969696" stroke-width="1"/><path d="M497 508.5H503" stroke="#969696" stroke-width="1"/><path d="M499.5 506V511" stroke="#969696" stroke-width="1"/><circle cx="490.3" cy="507.94" r="4.55" fill="#7b9b6b" stroke="#0a0a0a" stroke-width="1.2"/><circle cx="617.4" cy="507.94" r="4.55" fill="#7b9b6b" stroke="#0a0a0a" stroke-width="1.2"/><text transform="translate(505.6 529) scale(1.074 1)" x="0" y="0" font-size="9.7" fill="#e6e6e6">Visibility</text><circle cx="490.3" cy="524.26" r="4.55" fill="#e3bb8b" stroke="#0a0a0a" stroke-width="1.2"/><circle cx="617.4" cy="524.26" r="4.55" fill="#e3bb8b" stroke="#0a0a0a" stroke-width="1.2"/><text transform="translate(602.6 545) scale(1.053 1)" x="0" y="0" font-size="9.7" fill="#e6e6e6" text-anchor="end">Bounding Box</text><rect x="604.5" y="537.5" width="7" height="7" fill="none" stroke="#969696" stroke-width="1"/><path d="M605 541.5H611" stroke="#969696" stroke-width="1"/><path d="M607.5 539V544" stroke="#969696" stroke-width="1"/><circle cx="617.4" cy="540.58" r="4.55" fill="#000000" stroke="#0a0a0a" stroke-width="1.2"/><text transform="translate(602.6 562) scale(1.031 1)" x="0" y="0" font-size="9.7" fill="#e6e6e6" text-anchor="end">Center</text><rect x="604.5" y="553.5" width="7" height="7" fill="none" stroke="#969696" stroke-width="1"/><path d="M605 557.5H611" stroke="#969696" stroke-width="1"/><path d="M607.5 555V560" stroke="#969696" stroke-width="1"/><circle cx="617.4" cy="556.9" r="4.55" fill="#7b9b6b" stroke="#0a0a0a" stroke-width="1.2"/><text transform="translate(602.6 578) scale(1.027 1)" x="0" y="0" font-size="9.7" fill="#e6e6e6" text-anchor="end">Dag Local I...erse Matrix</text><circle cx="617.4" cy="573.22" r="4.55" fill="#52849a" stroke="#0a0a0a" stroke-width="1.2"/><text transform="translate(602.6 594) scale(1.038 1)" x="0" y="0" font-size="9.7" fill="#e6e6e6" text-anchor="end">Dag Local Matrix</text><circle cx="617.4" cy="589.54" r="4.55" fill="#52849a" stroke="#0a0a0a" stroke-width="1.2"/><text transform="translate(602.6 610) scale(1.058 1)" x="0" y="0" font-size="9.7" fill="#e6e6e6" text-anchor="end">Inverse Matrix</text><circle cx="617.4" cy="605.86" r="4.55" fill="#52849a" stroke="#0a0a0a" stroke-width="1.2"/><text transform="translate(602.6 627) scale(1.092 1)" x="0" y="0" font-size="9.7" fill="#e6e6e6" text-anchor="end">Matrix</text><circle cx="617.4" cy="622.18" r="4.55" fill="#52849a" stroke="#0a0a0a" stroke-width="1.2"/><text transform="translate(602.6 643) scale(1.030 1)" x="0" y="0" font-size="9.7" fill="#e6e6e6" text-anchor="end">Object Color RGB</text><rect x="604.5" y="634.5" width="7" height="7" fill="none" stroke="#969696" stroke-width="1"/><path d="M605 638.5H611" stroke="#969696" stroke-width="1"/><path d="M607.5 636V641" stroke="#969696" stroke-width="1"/><circle cx="617.4" cy="638.5" r="4.55" fill="#e00000" stroke="#0a0a0a" stroke-width="1.2"/><text transform="translate(602.6 659) scale(1.040 1)" x="0" y="0" font-size="9.7" fill="#e6e6e6" text-anchor="end">Parent Inverse Matrix</text><rect x="604.5" y="651.5" width="7" height="7" fill="none" stroke="#969696" stroke-width="1"/><path d="M605 655.5H611" stroke="#969696" stroke-width="1"/><path d="M607.5 653V658" stroke="#969696" stroke-width="1"/><circle cx="617.4" cy="654.82" r="4.55" fill="#52849a" stroke="#0a0a0a" stroke-width="1.2"/><text transform="translate(602.6 676) scale(1.041 1)" x="0" y="0" font-size="9.7" fill="#e6e6e6" text-anchor="end">Parent Matrix</text><rect x="604.5" y="667.5" width="7" height="7" fill="none" stroke="#969696" stroke-width="1"/><path d="M605 671.5H611" stroke="#969696" stroke-width="1"/><path d="M607.5 669V674" stroke="#969696" stroke-width="1"/><circle cx="617.4" cy="671.14" r="4.55" fill="#52849a" stroke="#0a0a0a" stroke-width="1.2"/><text transform="translate(602.6 692) scale(1.033 1)" x="0" y="0" font-size="9.7" fill="#e6e6e6" text-anchor="end">Select Handle</text><rect x="604.5" y="683.5" width="7" height="7" fill="none" stroke="#969696" stroke-width="1"/><path d="M605 687.5H611" stroke="#969696" stroke-width="1"/><path d="M607.5 685V690" stroke="#969696" stroke-width="1"/><circle cx="617.4" cy="687.46" r="4.55" fill="#7b9b6b" stroke="#0a0a0a" stroke-width="1.2"/><text transform="translate(602.6 708) scale(1.031 1)" x="0" y="0" font-size="9.7" fill="#e6e6e6" text-anchor="end">Trans Minu...tate Pivot</text><rect x="604.5" y="700.5" width="7" height="7" fill="none" stroke="#969696" stroke-width="1"/><path d="M605 704.5H611" stroke="#969696" stroke-width="1"/><path d="M607.5 702V707" stroke="#969696" stroke-width="1"/><circle cx="617.4" cy="703.78" r="4.55" fill="#7b9b6b" stroke="#0a0a0a" stroke-width="1.2"/><text transform="translate(602.6 725) scale(1.058 1)" x="0" y="0" font-size="9.7" fill="#e6e6e6" text-anchor="end">World Inverse Matrix</text><rect x="604.5" y="716.5" width="7" height="7" fill="none" stroke="#969696" stroke-width="1"/><path d="M605 720.5H611" stroke="#969696" stroke-width="1"/><path d="M607.5 718V723" stroke="#969696" stroke-width="1"/><circle cx="617.4" cy="720.1" r="4.55" fill="#52849a" stroke="#0a0a0a" stroke-width="1.2"/><text transform="translate(602.6 741) scale(1.096 1)" x="0" y="0" font-size="9.7" fill="#e6e6e6" text-anchor="end">World Matrix</text><rect x="604.5" y="732.5" width="7" height="7" fill="none" stroke="#969696" stroke-width="1"/><path d="M605 736.5H611" stroke="#969696" stroke-width="1"/><path d="M607.5 734V739" stroke="#969696" stroke-width="1"/><circle cx="617.4" cy="736.42" r="4.55" fill="#52849a" stroke="#0a0a0a" stroke-width="1.2"/><text transform="translate(602.6 757) scale(1.080 1)" x="0" y="0" font-size="9.7" fill="#e6e6e6" text-anchor="end">Xform Matrix</text><circle cx="617.4" cy="752.74" r="4.55" fill="#52849a" stroke="#0a0a0a" stroke-width="1.2"/></g>
<g><text x="831" y="74" font-size="10.4" fill="#e6e6e6">Arm_Ctrl_PV_grp_R</text><clipPath id="clip827_80"><rect x="827.5" y="80.5" width="127.1" height="341.84" rx="4.5"/></clipPath><rect x="827.5" y="80.5" width="127.1" height="341.84" rx="4.5" fill="#2f4279"/><g clip-path="url(#clip827_80)"><rect x="827.5" y="137.96" width="127.1" height="16.32" fill="#3e5089"/><rect x="827.5" y="170.6" width="127.1" height="16.32" fill="#3e5089"/><rect x="827.5" y="203.24" width="127.1" height="16.32" fill="#3e5089"/><rect x="827.5" y="235.88" width="127.1" height="16.32" fill="#3e5089"/><rect x="827.5" y="268.52" width="127.1" height="16.32" fill="#3e5089"/><rect x="827.5" y="301.16" width="127.1" height="16.32" fill="#3e5089"/><rect x="827.5" y="333.8" width="127.1" height="16.32" fill="#3e5089"/><rect x="827.5" y="366.44" width="127.1" height="16.32" fill="#3e5089"/><rect x="827.5" y="399.08" width="127.1" height="16.32" fill="#3e5089"/></g><rect x="827.5" y="80.5" width="127.1" height="341.84" rx="4.5" fill="none" stroke="#111111" stroke-width="1.5"/><rect x="832.7" y="105.8" width="116.7" height="14.6" fill="#2e385d" stroke="#1f2946" stroke-width="1"/><path d="M847.3 84.9L857.6 84.9L851.2 101.2L840.6 101.2Z" fill="#c8c8c8" stroke="#1a1a1a" stroke-width="0.9"/><path d="M840.1 91.9L848 91.9" stroke="#bb3636" stroke-width="1.8"/><path d="M847.3 89.1L853.1 91.8L847.3 94.5Z" fill="#e04848" stroke="#2a0a0a" stroke-width="0.7"/><rect x="931.5" y="85.9" width="11.8" height="3" rx="1.5" fill="#c8c8c8"/><rect x="931.5" y="90.4" width="11.8" height="3" rx="1.5" fill="#c8c8c8"/><rect x="931.5" y="95" width="11.8" height="3" rx="1.5" fill="#c8c8c8"/><circle cx="827.5" cy="92.7" r="5.85" fill="#7b9b6b" stroke="#0a0a0a" stroke-width="1.3"/><circle cx="954.6" cy="92.7" r="5.85" fill="#ffffff" stroke="#0a0a0a" stroke-width="1.3"/><text transform="translate(842.8 134) scale(0.990 1)" x="0" y="0" font-size="9.7" fill="#e6e6e6">Translate</text><rect x="833.5" y="126.5" width="7" height="7" fill="none" stroke="#969696" stroke-width="1"/><path d="M834 130.5H840" stroke="#969696" stroke-width="1"/><path d="M836.5 128V133" stroke="#969696" stroke-width="1"/><circle cx="827.5" cy="129.8" r="4.55" fill="#7b9b6b" stroke="#0a0a0a" stroke-width="1.2"/><circle cx="954.6" cy="129.8" r="4.55" fill="#7b9b6b" stroke="#0a0a0a" stroke-width="1.2"/><text transform="translate(842.8 151) scale(1.017 1)" x="0" y="0" font-size="9.7" fill="#e6e6e6">Rotate</text><rect x="833.5" y="142.5" width="7" height="7" fill="none" stroke="#969696" stroke-width="1"/><path d="M834 146.5H840" stroke="#969696" stroke-width="1"/><path d="M836.5 144V149" stroke="#969696" stroke-width="1"/><circle cx="827.5" cy="146.12" r="4.55" fill="#7b9b6b" stroke="#0a0a0a" stroke-width="1.2"/><circle cx="954.6" cy="146.12" r="4.55" fill="#7b9b6b" stroke="#0a0a0a" stroke-width="1.2"/><text transform="translate(842.8 167) scale(0.950 1)" x="0" y="0" font-size="9.7" fill="#e6e6e6">Scale</text><rect x="833.5" y="158.5" width="7" height="7" fill="none" stroke="#969696" stroke-width="1"/><path d="M834 162.5H840" stroke="#969696" stroke-width="1"/><path d="M836.5 160V165" stroke="#969696" stroke-width="1"/><circle cx="827.5" cy="162.44" r="4.55" fill="#7b9b6b" stroke="#0a0a0a" stroke-width="1.2"/><circle cx="954.6" cy="162.44" r="4.55" fill="#7b9b6b" stroke="#0a0a0a" stroke-width="1.2"/><text transform="translate(842.8 183) scale(1.074 1)" x="0" y="0" font-size="9.7" fill="#e6e6e6">Visibility</text><circle cx="827.5" cy="178.76" r="4.55" fill="#e3bb8b" stroke="#0a0a0a" stroke-width="1.2"/><circle cx="954.6" cy="178.76" r="4.55" fill="#e3bb8b" stroke="#0a0a0a" stroke-width="1.2"/><text transform="translate(939.8 200) scale(1.053 1)" x="0" y="0" font-size="9.7" fill="#e6e6e6" text-anchor="end">Bounding Box</text><rect x="941.5" y="191.5" width="7" height="7" fill="none" stroke="#969696" stroke-width="1"/><path d="M942 195.5H948" stroke="#969696" stroke-width="1"/><path d="M944.5 193V198" stroke="#969696" stroke-width="1"/><circle cx="954.6" cy="195.08" r="4.55" fill="#000000" stroke="#0a0a0a" stroke-width="1.2"/><text transform="translate(939.8 216) scale(1.031 1)" x="0" y="0" font-size="9.7" fill="#e6e6e6" text-anchor="end">Center</text><rect x="941.5" y="207.5" width="7" height="7" fill="none" stroke="#969696" stroke-width="1"/><path d="M942 211.5H948" stroke="#969696" stroke-width="1"/><path d="M944.5 209V214" stroke="#969696" stroke-width="1"/><circle cx="954.6" cy="211.4" r="4.55" fill="#7b9b6b" stroke="#0a0a0a" stroke-width="1.2"/><text transform="translate(939.8 232) scale(1.027 1)" x="0" y="0" font-size="9.7" fill="#e6e6e6" text-anchor="end">Dag Local I...erse Matrix</text><circle cx="954.6" cy="227.72" r="4.55" fill="#52849a" stroke="#0a0a0a" stroke-width="1.2"/><text transform="translate(939.8 249) scale(1.038 1)" x="0" y="0" font-size="9.7" fill="#e6e6e6" text-anchor="end">Dag Local Matrix</text><circle cx="954.6" cy="244.04" r="4.55" fill="#52849a" stroke="#0a0a0a" stroke-width="1.2"/><text transform="translate(939.8 265) scale(1.058 1)" x="0" y="0" font-size="9.7" fill="#e6e6e6" text-anchor="end">Inverse Matrix</text><circle cx="954.6" cy="260.36" r="4.55" fill="#52849a" stroke="#0a0a0a" stroke-width="1.2"/><text transform="translate(939.8 281) scale(1.092 1)" x="0" y="0" font-size="9.7" fill="#e6e6e6" text-anchor="end">Matrix</text><circle cx="954.6" cy="276.68" r="4.55" fill="#52849a" stroke="#0a0a0a" stroke-width="1.2"/><text transform="translate(939.8 298) scale(1.030 1)" x="0" y="0" font-size="9.7" fill="#e6e6e6" text-anchor="end">Object Color RGB</text><rect x="941.5" y="289.5" width="7" height="7" fill="none" stroke="#969696" stroke-width="1"/><path d="M942 293.5H948" stroke="#969696" stroke-width="1"/><path d="M944.5 291V296" stroke="#969696" stroke-width="1"/><circle cx="954.6" cy="293" r="4.55" fill="#e00000" stroke="#0a0a0a" stroke-width="1.2"/><text transform="translate(939.8 314) scale(1.040 1)" x="0" y="0" font-size="9.7" fill="#e6e6e6" text-anchor="end">Parent Inverse Matrix</text><rect x="941.5" y="305.5" width="7" height="7" fill="none" stroke="#969696" stroke-width="1"/><path d="M942 309.5H948" stroke="#969696" stroke-width="1"/><path d="M944.5 307V312" stroke="#969696" stroke-width="1"/><circle cx="954.6" cy="309.32" r="4.55" fill="#52849a" stroke="#0a0a0a" stroke-width="1.2"/><text transform="translate(939.8 330) scale(1.041 1)" x="0" y="0" font-size="9.7" fill="#e6e6e6" text-anchor="end">Parent Matrix</text><rect x="941.5" y="322.5" width="7" height="7" fill="none" stroke="#969696" stroke-width="1"/><path d="M942 326.5H948" stroke="#969696" stroke-width="1"/><path d="M944.5 324V329" stroke="#969696" stroke-width="1"/><circle cx="954.6" cy="325.64" r="4.55" fill="#52849a" stroke="#0a0a0a" stroke-width="1.2"/><text transform="translate(939.8 347) scale(1.033 1)" x="0" y="0" font-size="9.7" fill="#e6e6e6" text-anchor="end">Select Handle</text><rect x="941.5" y="338.5" width="7" height="7" fill="none" stroke="#969696" stroke-width="1"/><path d="M942 342.5H948" stroke="#969696" stroke-width="1"/><path d="M944.5 340V345" stroke="#969696" stroke-width="1"/><circle cx="954.6" cy="341.96" r="4.55" fill="#7b9b6b" stroke="#0a0a0a" stroke-width="1.2"/><text transform="translate(939.8 363) scale(1.031 1)" x="0" y="0" font-size="9.7" fill="#e6e6e6" text-anchor="end">Trans Minu...tate Pivot</text><rect x="941.5" y="354.5" width="7" height="7" fill="none" stroke="#969696" stroke-width="1"/><path d="M942 358.5H948" stroke="#969696" stroke-width="1"/><path d="M944.5 356V361" stroke="#969696" stroke-width="1"/><circle cx="954.6" cy="358.28" r="4.55" fill="#7b9b6b" stroke="#0a0a0a" stroke-width="1.2"/><text transform="translate(939.8 379) scale(1.058 1)" x="0" y="0" font-size="9.7" fill="#e6e6e6" text-anchor="end">World Inverse Matrix</text><rect x="941.5" y="371.5" width="7" height="7" fill="none" stroke="#969696" stroke-width="1"/><path d="M942 375.5H948" stroke="#969696" stroke-width="1"/><path d="M944.5 373V378" stroke="#969696" stroke-width="1"/><circle cx="954.6" cy="374.6" r="4.55" fill="#52849a" stroke="#0a0a0a" stroke-width="1.2"/><text transform="translate(939.8 396) scale(1.096 1)" x="0" y="0" font-size="9.7" fill="#e6e6e6" text-anchor="end">World Matrix</text><rect x="941.5" y="387.5" width="7" height="7" fill="none" stroke="#969696" stroke-width="1"/><path d="M942 391.5H948" stroke="#969696" stroke-width="1"/><path d="M944.5 389V394" stroke="#969696" stroke-width="1"/><circle cx="954.6" cy="390.92" r="4.55" fill="#52849a" stroke="#0a0a0a" stroke-width="1.2"/><text transform="translate(939.8 412) scale(1.080 1)" x="0" y="0" font-size="9.7" fill="#e6e6e6" text-anchor="end">Xform Matrix</text><circle cx="954.6" cy="407.24" r="4.55" fill="#52849a" stroke="#0a0a0a" stroke-width="1.2"/></g>
<g><text x="1046" y="73" font-size="10.4" fill="#e6e6e6">Arm_Ctrl_IK_grp_R</text><clipPath id="clip1042_79"><rect x="1042.5" y="79" width="127.1" height="341.84" rx="4.5"/></clipPath><rect x="1042.5" y="79" width="127.1" height="341.84" rx="4.5" fill="#2f4279"/><g clip-path="url(#clip1042_79)"><rect x="1042.5" y="136.46" width="127.1" height="16.32" fill="#3e5089"/><rect x="1042.5" y="169.1" width="127.1" height="16.32" fill="#3e5089"/><rect x="1042.5" y="201.74" width="127.1" height="16.32" fill="#3e5089"/><rect x="1042.5" y="234.38" width="127.1" height="16.32" fill="#3e5089"/><rect x="1042.5" y="267.02" width="127.1" height="16.32" fill="#3e5089"/><rect x="1042.5" y="299.66" width="127.1" height="16.32" fill="#3e5089"/><rect x="1042.5" y="332.3" width="127.1" height="16.32" fill="#3e5089"/><rect x="1042.5" y="364.94" width="127.1" height="16.32" fill="#3e5089"/><rect x="1042.5" y="397.58" width="127.1" height="16.32" fill="#3e5089"/></g><rect x="1042.5" y="79" width="127.1" height="341.84" rx="4.5" fill="none" stroke="#111111" stroke-width="1.5"/><rect x="1047.7" y="104.3" width="116.7" height="14.6" fill="#2e385d" stroke="#1f2946" stroke-width="1"/><path d="M1062.3 82.9L1072.6 82.9L1066.2 99.2L1055.6 99.2Z" fill="#c8c8c8" stroke="#1a1a1a" stroke-width="0.9"/><path d="M1055.1 89.9L1063 89.9" stroke="#bb3636" stroke-width="1.8"/><path d="M1062.3 87.1L1068.1 89.8L1062.3 92.5Z" fill="#e04848" stroke="#2a0a0a" stroke-width="0.7"/><rect x="1146.5" y="83.9" width="11.8" height="3" rx="1.5" fill="#c8c8c8"/><rect x="1146.5" y="88.4" width="11.8" height="3" rx="1.5" fill="#c8c8c8"/><rect x="1146.5" y="93" width="11.8" height="3" rx="1.5" fill="#c8c8c8"/><circle cx="1042.5" cy="91.2" r="5.85" fill="#7b9b6b" stroke="#0a0a0a" stroke-width="1.3"/><circle cx="1169.6" cy="91.2" r="5.85" fill="#ffffff" stroke="#0a0a0a" stroke-width="1.3"/><text transform="translate(1057.8 133) scale(0.990 1)" x="0" y="0" font-size="9.7" fill="#e6e6e6">Translate</text><rect x="1048.5" y="124.5" width="7" height="7" fill="none" stroke="#969696" stroke-width="1"/><path d="M1049 128.5H1055" stroke="#969696" stroke-width="1"/><path d="M1051.5 126V131" stroke="#969696" stroke-width="1"/><circle cx="1042.5" cy="128.3" r="4.55" fill="#7b9b6b" stroke="#0a0a0a" stroke-width="1.2"/><circle cx="1169.6" cy="128.3" r="4.55" fill="#7b9b6b" stroke="#0a0a0a" stroke-width="1.2"/><text transform="translate(1057.8 149) scale(1.017 1)" x="0" y="0" font-size="9.7" fill="#e6e6e6">Rotate</text><rect x="1048.5" y="141.5" width="7" height="7" fill="none" stroke="#969696" stroke-width="1"/><path d="M1049 145.5H1055" stroke="#969696" stroke-width="1"/><path d="M1051.5 143V148" stroke="#969696" stroke-width="1"/><circle cx="1042.5" cy="144.62" r="4.55" fill="#7b9b6b" stroke="#0a0a0a" stroke-width="1.2"/><circle cx="1169.6" cy="144.62" r="4.55" fill="#7b9b6b" stroke="#0a0a0a" stroke-width="1.2"/><text transform="translate(1057.8 166) scale(0.950 1)" x="0" y="0" font-size="9.7" fill="#e6e6e6">Scale</text><rect x="1048.5" y="157.5" width="7" height="7" fill="none" stroke="#969696" stroke-width="1"/><path d="M1049 161.5H1055" stroke="#969696" stroke-width="1"/><path d="M1051.5 159V164" stroke="#969696" stroke-width="1"/><circle cx="1042.5" cy="160.94" r="4.55" fill="#7b9b6b" stroke="#0a0a0a" stroke-width="1.2"/><circle cx="1169.6" cy="160.94" r="4.55" fill="#7b9b6b" stroke="#0a0a0a" stroke-width="1.2"/><text transform="translate(1057.8 182) scale(1.074 1)" x="0" y="0" font-size="9.7" fill="#e6e6e6">Visibility</text><circle cx="1042.5" cy="177.26" r="4.55" fill="#e3bb8b" stroke="#0a0a0a" stroke-width="1.2"/><circle cx="1169.6" cy="177.26" r="4.55" fill="#e3bb8b" stroke="#0a0a0a" stroke-width="1.2"/><text transform="translate(1154.8 198) scale(1.053 1)" x="0" y="0" font-size="9.7" fill="#e6e6e6" text-anchor="end">Bounding Box</text><rect x="1156.5" y="190.5" width="7" height="7" fill="none" stroke="#969696" stroke-width="1"/><path d="M1157 194.5H1163" stroke="#969696" stroke-width="1"/><path d="M1159.5 192V197" stroke="#969696" stroke-width="1"/><circle cx="1169.6" cy="193.58" r="4.55" fill="#000000" stroke="#0a0a0a" stroke-width="1.2"/><text transform="translate(1154.8 214) scale(1.031 1)" x="0" y="0" font-size="9.7" fill="#e6e6e6" text-anchor="end">Center</text><rect x="1156.5" y="206.5" width="7" height="7" fill="none" stroke="#969696" stroke-width="1"/><path d="M1157 210.5H1163" stroke="#969696" stroke-width="1"/><path d="M1159.5 208V213" stroke="#969696" stroke-width="1"/><circle cx="1169.6" cy="209.9" r="4.55" fill="#7b9b6b" stroke="#0a0a0a" stroke-width="1.2"/><text transform="translate(1154.8 231) scale(1.027 1)" x="0" y="0" font-size="9.7" fill="#e6e6e6" text-anchor="end">Dag Local I...erse Matrix</text><circle cx="1169.6" cy="226.22" r="4.55" fill="#52849a" stroke="#0a0a0a" stroke-width="1.2"/><text transform="translate(1154.8 247) scale(1.038 1)" x="0" y="0" font-size="9.7" fill="#e6e6e6" text-anchor="end">Dag Local Matrix</text><circle cx="1169.6" cy="242.54" r="4.55" fill="#52849a" stroke="#0a0a0a" stroke-width="1.2"/><text transform="translate(1154.8 263) scale(1.058 1)" x="0" y="0" font-size="9.7" fill="#e6e6e6" text-anchor="end">Inverse Matrix</text><circle cx="1169.6" cy="258.86" r="4.55" fill="#52849a" stroke="#0a0a0a" stroke-width="1.2"/><text transform="translate(1154.8 280) scale(1.092 1)" x="0" y="0" font-size="9.7" fill="#e6e6e6" text-anchor="end">Matrix</text><circle cx="1169.6" cy="275.18" r="4.55" fill="#52849a" stroke="#0a0a0a" stroke-width="1.2"/><text transform="translate(1154.8 296) scale(1.030 1)" x="0" y="0" font-size="9.7" fill="#e6e6e6" text-anchor="end">Object Color RGB</text><rect x="1156.5" y="288.5" width="7" height="7" fill="none" stroke="#969696" stroke-width="1"/><path d="M1157 292.5H1163" stroke="#969696" stroke-width="1"/><path d="M1159.5 290V295" stroke="#969696" stroke-width="1"/><circle cx="1169.6" cy="291.5" r="4.55" fill="#e00000" stroke="#0a0a0a" stroke-width="1.2"/><text transform="translate(1154.8 312) scale(1.040 1)" x="0" y="0" font-size="9.7" fill="#e6e6e6" text-anchor="end">Parent Inverse Matrix</text><rect x="1156.5" y="304.5" width="7" height="7" fill="none" stroke="#969696" stroke-width="1"/><path d="M1157 308.5H1163" stroke="#969696" stroke-width="1"/><path d="M1159.5 306V311" stroke="#969696" stroke-width="1"/><circle cx="1169.6" cy="307.82" r="4.55" fill="#52849a" stroke="#0a0a0a" stroke-width="1.2"/><text transform="translate(1154.8 329) scale(1.041 1)" x="0" y="0" font-size="9.7" fill="#e6e6e6" text-anchor="end">Parent Matrix</text><rect x="1156.5" y="320.5" width="7" height="7" fill="none" stroke="#969696" stroke-width="1"/><path d="M1157 324.5H1163" stroke="#969696" stroke-width="1"/><path d="M1159.5 322V327" stroke="#969696" stroke-width="1"/><circle cx="1169.6" cy="324.14" r="4.55" fill="#52849a" stroke="#0a0a0a" stroke-width="1.2"/><text transform="translate(1154.8 345) scale(1.033 1)" x="0" y="0" font-size="9.7" fill="#e6e6e6" text-anchor="end">Select Handle</text><rect x="1156.5" y="336.5" width="7" height="7" fill="none" stroke="#969696" stroke-width="1"/><path d="M1157 340.5H1163" stroke="#969696" stroke-width="1"/><path d="M1159.5 338V343" stroke="#969696" stroke-width="1"/><circle cx="1169.6" cy="340.46" r="4.55" fill="#7b9b6b" stroke="#0a0a0a" stroke-width="1.2"/><text transform="translate(1154.8 361) scale(1.031 1)" x="0" y="0" font-size="9.7" fill="#e6e6e6" text-anchor="end">Trans Minu...tate Pivot</text><rect x="1156.5" y="353.5" width="7" height="7" fill="none" stroke="#969696" stroke-width="1"/><path d="M1157 357.5H1163" stroke="#969696" stroke-width="1"/><path d="M1159.5 355V360" stroke="#969696" stroke-width="1"/><circle cx="1169.6" cy="356.78" r="4.55" fill="#7b9b6b" stroke="#0a0a0a" stroke-width="1.2"/><text transform="translate(1154.8 378) scale(1.058 1)" x="0" y="0" font-size="9.7" fill="#e6e6e6" text-anchor="end">World Inverse Matrix</text><rect x="1156.5" y="369.5" width="7" height="7" fill="none" stroke="#969696" stroke-width="1"/><path d="M1157 373.5H1163" stroke="#969696" stroke-width="1"/><path d="M1159.5 371V376" stroke="#969696" stroke-width="1"/><circle cx="1169.6" cy="373.1" r="4.55" fill="#52849a" stroke="#0a0a0a" stroke-width="1.2"/><text transform="translate(1154.8 394) scale(1.096 1)" x="0" y="0" font-size="9.7" fill="#e6e6e6" text-anchor="end">World Matrix</text><rect x="1156.5" y="385.5" width="7" height="7" fill="none" stroke="#969696" stroke-width="1"/><path d="M1157 389.5H1163" stroke="#969696" stroke-width="1"/><path d="M1159.5 387V392" stroke="#969696" stroke-width="1"/><circle cx="1169.6" cy="389.42" r="4.55" fill="#52849a" stroke="#0a0a0a" stroke-width="1.2"/><text transform="translate(1154.8 410) scale(1.080 1)" x="0" y="0" font-size="9.7" fill="#e6e6e6" text-anchor="end">Xform Matrix</text><circle cx="1169.6" cy="405.74" r="4.55" fill="#52849a" stroke="#0a0a0a" stroke-width="1.2"/></g>
<g><text x="834" y="584" font-size="10.4" fill="#e6e6e6">Arm_Ctrl_IK_grp_L</text><clipPath id="clip830_589"><rect x="830.5" y="589.8" width="127.1" height="341.84" rx="4.5"/></clipPath><rect x="830.5" y="589.8" width="127.1" height="341.84" rx="4.5" fill="#2f4279"/><g clip-path="url(#clip830_589)"><rect x="830.5" y="647.26" width="127.1" height="16.32" fill="#3e5089"/><rect x="830.5" y="679.9" width="127.1" height="16.32" fill="#3e5089"/><rect x="830.5" y="712.54" width="127.1" height="16.32" fill="#3e5089"/><rect x="830.5" y="745.18" width="127.1" height="16.32" fill="#3e5089"/><rect x="830.5" y="777.82" width="127.1" height="16.32" fill="#3e5089"/><rect x="830.5" y="810.46" width="127.1" height="16.32" fill="#3e5089"/><rect x="830.5" y="843.1" width="127.1" height="16.32" fill="#3e5089"/><rect x="830.5" y="875.74" width="127.1" height="16.32" fill="#3e5089"/><rect x="830.5" y="908.38" width="127.1" height="16.32" fill="#3e5089"/></g><rect x="830.5" y="589.8" width="127.1" height="341.84" rx="4.5" fill="none" stroke="#111111" stroke-width="1.5"/><rect x="835.7" y="615.1" width="116.7" height="14.6" fill="#2e385d" stroke="#1f2946" stroke-width="1"/><path d="M850.3 593.9L860.6 593.9L854.2 610.2L843.6 610.2Z" fill="#c8c8c8" stroke="#1a1a1a" stroke-width="0.9"/><path d="M843.1 600.9L851 600.9" stroke="#bb3636" stroke-width="1.8"/><path d="M850.3 598.1L856.1 600.8L850.3 603.5Z" fill="#e04848" stroke="#2a0a0a" stroke-width="0.7"/><rect x="934.5" y="594.9" width="11.8" height="3" rx="1.5" fill="#c8c8c8"/><rect x="934.5" y="599.4" width="11.8" height="3" rx="1.5" fill="#c8c8c8"/><rect x="934.5" y="604" width="11.8" height="3" rx="1.5" fill="#c8c8c8"/><circle cx="830.5" cy="602" r="5.85" fill="#7b9b6b" stroke="#0a0a0a" stroke-width="1.3"/><circle cx="957.6" cy="602" r="5.85" fill="#ffffff" stroke="#0a0a0a" stroke-width="1.3"/><text transform="translate(845.8 644) scale(0.990 1)" x="0" y="0" font-size="9.7" fill="#e6e6e6">Translate</text><rect x="836.5" y="635.5" width="7" height="7" fill="none" stroke="#969696" stroke-width="1"/><path d="M837 639.5H843" stroke="#969696" stroke-width="1"/><path d="M839.5 637V642" stroke="#969696" stroke-width="1"/><circle cx="830.5" cy="639.1" r="4.55" fill="#7b9b6b" stroke="#0a0a0a" stroke-width="1.2"/><circle cx="957.6" cy="639.1" r="4.55" fill="#7b9b6b" stroke="#0a0a0a" stroke-width="1.2"/><text transform="translate(845.8 660) scale(1.017 1)" x="0" y="0" font-size="9.7" fill="#e6e6e6">Rotate</text><rect x="836.5" y="651.5" width="7" height="7" fill="none" stroke="#969696" stroke-width="1"/><path d="M837 655.5H843" stroke="#969696" stroke-width="1"/><path d="M839.5 653V658" stroke="#969696" stroke-width="1"/><circle cx="830.5" cy="655.42" r="4.55" fill="#7b9b6b" stroke="#0a0a0a" stroke-width="1.2"/><circle cx="957.6" cy="655.42" r="4.55" fill="#7b9b6b" stroke="#0a0a0a" stroke-width="1.2"/><text transform="translate(845.8 676) scale(0.950 1)" x="0" y="0" font-size="9.7" fill="#e6e6e6">Scale</text><rect x="836.5" y="668.5" width="7" height="7" fill="none" stroke="#969696" stroke-width="1"/><path d="M837 672.5H843" stroke="#969696" stroke-width="1"/><path d="M839.5 670V675" stroke="#969696" stroke-width="1"/><circle cx="830.5" cy="671.74" r="4.55" fill="#7b9b6b" stroke="#0a0a0a" stroke-width="1.2"/><circle cx="957.6" cy="671.74" r="4.55" fill="#7b9b6b" stroke="#0a0a0a" stroke-width="1.2"/><text transform="translate(845.8 693) scale(1.074 1)" x="0" y="0" font-size="9.7" fill="#e6e6e6">Visibility</text><circle cx="830.5" cy="688.06" r="4.55" fill="#e3bb8b" stroke="#0a0a0a" stroke-width="1.2"/><circle cx="957.6" cy="688.06" r="4.55" fill="#e3bb8b" stroke="#0a0a0a" stroke-width="1.2"/><text transform="translate(942.8 709) scale(1.053 1)" x="0" y="0" font-size="9.7" fill="#e6e6e6" text-anchor="end">Bounding Box</text><rect x="944.5" y="700.5" width="7" height="7" fill="none" stroke="#969696" stroke-width="1"/><path d="M945 704.5H951" stroke="#969696" stroke-width="1"/><path d="M947.5 702V707" stroke="#969696" stroke-width="1"/><circle cx="957.6" cy="704.38" r="4.55" fill="#000000" stroke="#0a0a0a" stroke-width="1.2"/><text transform="translate(942.8 725) scale(1.031 1)" x="0" y="0" font-size="9.7" fill="#e6e6e6" text-anchor="end">Center</text><rect x="944.5" y="717.5" width="7" height="7" fill="none" stroke="#969696" stroke-width="1"/><path d="M945 721.5H951" stroke="#969696" stroke-width="1"/><path d="M947.5 719V724" stroke="#969696" stroke-width="1"/><circle cx="957.6" cy="720.7" r="4.55" fill="#7b9b6b" stroke="#0a0a0a" stroke-width="1.2"/><text transform="translate(942.8 742) scale(1.027 1)" x="0" y="0" font-size="9.7" fill="#e6e6e6" text-anchor="end">Dag Local I...erse Matrix</text><circle cx="957.6" cy="737.02" r="4.55" fill="#52849a" stroke="#0a0a0a" stroke-width="1.2"/><text transform="translate(942.8 758) scale(1.038 1)" x="0" y="0" font-size="9.7" fill="#e6e6e6" text-anchor="end">Dag Local Matrix</text><circle cx="957.6" cy="753.34" r="4.55" fill="#52849a" stroke="#0a0a0a" stroke-width="1.2"/><text transform="translate(942.8 774) scale(1.058 1)" x="0" y="0" font-size="9.7" fill="#e6e6e6" text-anchor="end">Inverse Matrix</text><circle cx="957.6" cy="769.66" r="4.55" fill="#52849a" stroke="#0a0a0a" stroke-width="1.2"/><text transform="translate(942.8 791) scale(1.092 1)" x="0" y="0" font-size="9.7" fill="#e6e6e6" text-anchor="end">Matrix</text><circle cx="957.6" cy="785.98" r="4.55" fill="#52849a" stroke="#0a0a0a" stroke-width="1.2"/><text transform="translate(942.8 807) scale(1.030 1)" x="0" y="0" font-size="9.7" fill="#e6e6e6" text-anchor="end">Object Color RGB</text><rect x="944.5" y="798.5" width="7" height="7" fill="none" stroke="#969696" stroke-width="1"/><path d="M945 802.5H951" stroke="#969696" stroke-width="1"/><path d="M947.5 800V805" stroke="#969696" stroke-width="1"/><circle cx="957.6" cy="802.3" r="4.55" fill="#e00000" stroke="#0a0a0a" stroke-width="1.2"/><text transform="translate(942.8 823) scale(1.040 1)" x="0" y="0" font-size="9.7" fill="#e6e6e6" text-anchor="end">Parent Inverse Matrix</text><rect x="944.5" y="815.5" width="7" height="7" fill="none" stroke="#969696" stroke-width="1"/><path d="M945 819.5H951" stroke="#969696" stroke-width="1"/><path d="M947.5 817V822" stroke="#969696" stroke-width="1"/><circle cx="957.6" cy="818.62" r="4.55" fill="#52849a" stroke="#0a0a0a" stroke-width="1.2"/><text transform="translate(942.8 840) scale(1.041 1)" x="0" y="0" font-size="9.7" fill="#e6e6e6" text-anchor="end">Parent Matrix</text><rect x="944.5" y="831.5" width="7" height="7" fill="none" stroke="#969696" stroke-width="1"/><path d="M945 835.5H951" stroke="#969696" stroke-width="1"/><path d="M947.5 833V838" stroke="#969696" stroke-width="1"/><circle cx="957.6" cy="834.94" r="4.55" fill="#52849a" stroke="#0a0a0a" stroke-width="1.2"/><text transform="translate(942.8 856) scale(1.033 1)" x="0" y="0" font-size="9.7" fill="#e6e6e6" text-anchor="end">Select Handle</text><rect x="944.5" y="847.5" width="7" height="7" fill="none" stroke="#969696" stroke-width="1"/><path d="M945 851.5H951" stroke="#969696" stroke-width="1"/><path d="M947.5 849V854" stroke="#969696" stroke-width="1"/><circle cx="957.6" cy="851.26" r="4.55" fill="#7b9b6b" stroke="#0a0a0a" stroke-width="1.2"/><text transform="translate(942.8 872) scale(1.031 1)" x="0" y="0" font-size="9.7" fill="#e6e6e6" text-anchor="end">Trans Minu...tate Pivot</text><rect x="944.5" y="864.5" width="7" height="7" fill="none" stroke="#969696" stroke-width="1"/><path d="M945 868.5H951" stroke="#969696" stroke-width="1"/><path d="M947.5 866V871" stroke="#969696" stroke-width="1"/><circle cx="957.6" cy="867.58" r="4.55" fill="#7b9b6b" stroke="#0a0a0a" stroke-width="1.2"/><text transform="translate(942.8 889) scale(1.058 1)" x="0" y="0" font-size="9.7" fill="#e6e6e6" text-anchor="end">World Inverse Matrix</text><rect x="944.5" y="880.5" width="7" height="7" fill="none" stroke="#969696" stroke-width="1"/><path d="M945 884.5H951" stroke="#969696" stroke-width="1"/><path d="M947.5 882V887" stroke="#969696" stroke-width="1"/><circle cx="957.6" cy="883.9" r="4.55" fill="#52849a" stroke="#0a0a0a" stroke-width="1.2"/><text transform="translate(942.8 905) scale(1.096 1)" x="0" y="0" font-size="9.7" fill="#e6e6e6" text-anchor="end">World Matrix</text><rect x="944.5" y="896.5" width="7" height="7" fill="none" stroke="#969696" stroke-width="1"/><path d="M945 900.5H951" stroke="#969696" stroke-width="1"/><path d="M947.5 898V903" stroke="#969696" stroke-width="1"/><circle cx="957.6" cy="900.22" r="4.55" fill="#52849a" stroke="#0a0a0a" stroke-width="1.2"/><text transform="translate(942.8 921) scale(1.080 1)" x="0" y="0" font-size="9.7" fill="#e6e6e6" text-anchor="end">Xform Matrix</text><circle cx="957.6" cy="916.54" r="4.55" fill="#52849a" stroke="#0a0a0a" stroke-width="1.2"/></g>
<g><text x="1021.8" y="584" font-size="10.4" fill="#e6e6e6">Arm_Ctrl_PV_grp_L</text><clipPath id="clip1018_590"><rect x="1018.3" y="590.5" width="127.1" height="341.84" rx="4.5"/></clipPath><rect x="1018.3" y="590.5" width="127.1" height="341.84" rx="4.5" fill="#2f4279"/><g clip-path="url(#clip1018_590)"><rect x="1018.3" y="647.96" width="127.1" height="16.32" fill="#3e5089"/><rect x="1018.3" y="680.6" width="127.1" height="16.32" fill="#3e5089"/><rect x="1018.3" y="713.24" width="127.1" height="16.32" fill="#3e5089"/><rect x="1018.3" y="745.88" width="127.1" height="16.32" fill="#3e5089"/><rect x="1018.3" y="778.52" width="127.1" height="16.32" fill="#3e5089"/><rect x="1018.3" y="811.16" width="127.1" height="16.32" fill="#3e5089"/><rect x="1018.3" y="843.8" width="127.1" height="16.32" fill="#3e5089"/><rect x="1018.3" y="876.44" width="127.1" height="16.32" fill="#3e5089"/><rect x="1018.3" y="909.08" width="127.1" height="16.32" fill="#3e5089"/></g><rect x="1018.3" y="590.5" width="127.1" height="341.84" rx="4.5" fill="none" stroke="#111111" stroke-width="1.5"/><rect x="1023.5" y="615.8" width="116.7" height="14.6" fill="#2e385d" stroke="#1f2946" stroke-width="1"/><path d="M1038.1 593.9L1048.4 593.9L1042 610.2L1031.4 610.2Z" fill="#c8c8c8" stroke="#1a1a1a" stroke-width="0.9"/><path d="M1030.9 600.9L1038.8 600.9" stroke="#bb3636" stroke-width="1.8"/><path d="M1038.1 598.1L1043.9 600.8L1038.1 603.5Z" fill="#e04848" stroke="#2a0a0a" stroke-width="0.7"/><rect x="1122.3" y="594.9" width="11.8" height="3" rx="1.5" fill="#c8c8c8"/><rect x="1122.3" y="599.4" width="11.8" height="3" rx="1.5" fill="#c8c8c8"/><rect x="1122.3" y="604" width="11.8" height="3" rx="1.5" fill="#c8c8c8"/><circle cx="1018.3" cy="602.7" r="5.85" fill="#7b9b6b" stroke="#0a0a0a" stroke-width="1.3"/><circle cx="1145.4" cy="602.7" r="5.85" fill="#ffffff" stroke="#0a0a0a" stroke-width="1.3"/><text transform="translate(1033.6 644) scale(0.990 1)" x="0" y="0" font-size="9.7" fill="#e6e6e6">Translate</text><rect x="1024.5" y="636.5" width="7" height="7" fill="none" stroke="#969696" stroke-width="1"/><path d="M1025 640.5H1031" stroke="#969696" stroke-width="1"/><path d="M1027.5 638V643" stroke="#969696" stroke-width="1"/><circle cx="1018.3" cy="639.8" r="4.55" fill="#7b9b6b" stroke="#0a0a0a" stroke-width="1.2"/><circle cx="1145.4" cy="639.8" r="4.55" fill="#7b9b6b" stroke="#0a0a0a" stroke-width="1.2"/><text transform="translate(1033.6 661) scale(1.017 1)" x="0" y="0" font-size="9.7" fill="#e6e6e6">Rotate</text><rect x="1024.5" y="652.5" width="7" height="7" fill="none" stroke="#969696" stroke-width="1"/><path d="M1025 656.5H1031" stroke="#969696" stroke-width="1"/><path d="M1027.5 654V659" stroke="#969696" stroke-width="1"/><circle cx="1018.3" cy="656.12" r="4.55" fill="#7b9b6b" stroke="#0a0a0a" stroke-width="1.2"/><circle cx="1145.4" cy="656.12" r="4.55" fill="#7b9b6b" stroke="#0a0a0a" stroke-width="1.2"/><text transform="translate(1033.6 677) scale(0.950 1)" x="0" y="0" font-size="9.7" fill="#e6e6e6">Scale</text><rect x="1024.5" y="668.5" width="7" height="7" fill="none" stroke="#969696" stroke-width="1"/><path d="M1025 672.5H1031" stroke="#969696" stroke-width="1"/><path d="M1027.5 670V675" stroke="#969696" stroke-width="1"/><circle cx="1018.3" cy="672.44" r="4.55" fill="#7b9b6b" stroke="#0a0a0a" stroke-width="1.2"/><circle cx="1145.4" cy="672.44" r="4.55" fill="#7b9b6b" stroke="#0a0a0a" stroke-width="1.2"/><text transform="translate(1033.6 693) scale(1.074 1)" x="0" y="0" font-size="9.7" fill="#e6e6e6">Visibility</text><circle cx="1018.3" cy="688.76" r="4.55" fill="#e3bb8b" stroke="#0a0a0a" stroke-width="1.2"/><circle cx="1145.4" cy="688.76" r="4.55" fill="#e3bb8b" stroke="#0a0a0a" stroke-width="1.2"/><text transform="translate(1130.6 710) scale(1.053 1)" x="0" y="0" font-size="9.7" fill="#e6e6e6" text-anchor="end">Bounding Box</text><rect x="1132.5" y="701.5" width="7" height="7" fill="none" stroke="#969696" stroke-width="1"/><path d="M1133 705.5H1139" stroke="#969696" stroke-width="1"/><path d="M1135.5 703V708" stroke="#969696" stroke-width="1"/><circle cx="1145.4" cy="705.08" r="4.55" fill="#000000" stroke="#0a0a0a" stroke-width="1.2"/><text transform="translate(1130.6 726) scale(1.031 1)" x="0" y="0" font-size="9.7" fill="#e6e6e6" text-anchor="end">Center</text><rect x="1132.5" y="717.5" width="7" height="7" fill="none" stroke="#969696" stroke-width="1"/><path d="M1133 721.5H1139" stroke="#969696" stroke-width="1"/><path d="M1135.5 719V724" stroke="#969696" stroke-width="1"/><circle cx="1145.4" cy="721.4" r="4.55" fill="#7b9b6b" stroke="#0a0a0a" stroke-width="1.2"/><text transform="translate(1130.6 742) scale(1.027 1)" x="0" y="0" font-size="9.7" fill="#e6e6e6" text-anchor="end">Dag Local I...erse Matrix</text><circle cx="1145.4" cy="737.72" r="4.55" fill="#52849a" stroke="#0a0a0a" stroke-width="1.2"/><text transform="translate(1130.6 759) scale(1.038 1)" x="0" y="0" font-size="9.7" fill="#e6e6e6" text-anchor="end">Dag Local Matrix</text><circle cx="1145.4" cy="754.04" r="4.55" fill="#52849a" stroke="#0a0a0a" stroke-width="1.2"/><text transform="translate(1130.6 775) scale(1.058 1)" x="0" y="0" font-size="9.7" fill="#e6e6e6" text-anchor="end">Inverse Matrix</text><circle cx="1145.4" cy="770.36" r="4.55" fill="#52849a" stroke="#0a0a0a" stroke-width="1.2"/><text transform="translate(1130.6 791) scale(1.092 1)" x="0" y="0" font-size="9.7" fill="#e6e6e6" text-anchor="end">Matrix</text><circle cx="1145.4" cy="786.68" r="4.55" fill="#52849a" stroke="#0a0a0a" stroke-width="1.2"/><text transform="translate(1130.6 808) scale(1.030 1)" x="0" y="0" font-size="9.7" fill="#e6e6e6" text-anchor="end">Object Color RGB</text><rect x="1132.5" y="799.5" width="7" height="7" fill="none" stroke="#969696" stroke-width="1"/><path d="M1133 803.5H1139" stroke="#969696" stroke-width="1"/><path d="M1135.5 801V806" stroke="#969696" stroke-width="1"/><circle cx="1145.4" cy="803" r="4.55" fill="#e00000" stroke="#0a0a0a" stroke-width="1.2"/><text transform="translate(1130.6 824) scale(1.040 1)" x="0" y="0" font-size="9.7" fill="#e6e6e6" text-anchor="end">Parent Inverse Matrix</text><rect x="1132.5" y="815.5" width="7" height="7" fill="none" stroke="#969696" stroke-width="1"/><path d="M1133 819.5H1139" stroke="#969696" stroke-width="1"/><path d="M1135.5 817V822" stroke="#969696" stroke-width="1"/><circle cx="1145.4" cy="819.32" r="4.55" fill="#52849a" stroke="#0a0a0a" stroke-width="1.2"/><text transform="translate(1130.6 840) scale(1.041 1)" x="0" y="0" font-size="9.7" fill="#e6e6e6" text-anchor="end">Parent Matrix</text><rect x="1132.5" y="832.5" width="7" height="7" fill="none" stroke="#969696" stroke-width="1"/><path d="M1133 836.5H1139" stroke="#969696" stroke-width="1"/><path d="M1135.5 834V839" stroke="#969696" stroke-width="1"/><circle cx="1145.4" cy="835.64" r="4.55" fill="#52849a" stroke="#0a0a0a" stroke-width="1.2"/><text transform="translate(1130.6 857) scale(1.033 1)" x="0" y="0" font-size="9.7" fill="#e6e6e6" text-anchor="end">Select Handle</text><rect x="1132.5" y="848.5" width="7" height="7" fill="none" stroke="#969696" stroke-width="1"/><path d="M1133 852.5H1139" stroke="#969696" stroke-width="1"/><path d="M1135.5 850V855" stroke="#969696" stroke-width="1"/><circle cx="1145.4" cy="851.96" r="4.55" fill="#7b9b6b" stroke="#0a0a0a" stroke-width="1.2"/><text transform="translate(1130.6 873) scale(1.031 1)" x="0" y="0" font-size="9.7" fill="#e6e6e6" text-anchor="end">Trans Minu...tate Pivot</text><rect x="1132.5" y="864.5" width="7" height="7" fill="none" stroke="#969696" stroke-width="1"/><path d="M1133 868.5H1139" stroke="#969696" stroke-width="1"/><path d="M1135.5 866V871" stroke="#969696" stroke-width="1"/><circle cx="1145.4" cy="868.28" r="4.55" fill="#7b9b6b" stroke="#0a0a0a" stroke-width="1.2"/><text transform="translate(1130.6 889) scale(1.058 1)" x="0" y="0" font-size="9.7" fill="#e6e6e6" text-anchor="end">World Inverse Matrix</text><rect x="1132.5" y="881.5" width="7" height="7" fill="none" stroke="#969696" stroke-width="1"/><path d="M1133 885.5H1139" stroke="#969696" stroke-width="1"/><path d="M1135.5 883V888" stroke="#969696" stroke-width="1"/><circle cx="1145.4" cy="884.6" r="4.55" fill="#52849a" stroke="#0a0a0a" stroke-width="1.2"/><text transform="translate(1130.6 906) scale(1.096 1)" x="0" y="0" font-size="9.7" fill="#e6e6e6" text-anchor="end">World Matrix</text><rect x="1132.5" y="897.5" width="7" height="7" fill="none" stroke="#969696" stroke-width="1"/><path d="M1133 901.5H1139" stroke="#969696" stroke-width="1"/><path d="M1135.5 899V904" stroke="#969696" stroke-width="1"/><circle cx="1145.4" cy="900.92" r="4.55" fill="#52849a" stroke="#0a0a0a" stroke-width="1.2"/><text transform="translate(1130.6 922) scale(1.080 1)" x="0" y="0" font-size="9.7" fill="#e6e6e6" text-anchor="end">Xform Matrix</text><circle cx="1145.4" cy="917.24" r="4.55" fill="#52849a" stroke="#0a0a0a" stroke-width="1.2"/></g>
<rect x="0" y="888" width="1216" height="3" fill="#262626"/>
<rect x="527" y="888" width="61" height="3" fill="#5a5a5a"/>
<rect x="0" y="888" width="29" height="3" fill="#f8c630"/>
<path d="M1 891L4 888L8 888L5 891Z" fill="#e86a10"/>
<rect x="0" y="888" width="1" height="3" fill="#f0f0f0"/>
</svg></body></html>
